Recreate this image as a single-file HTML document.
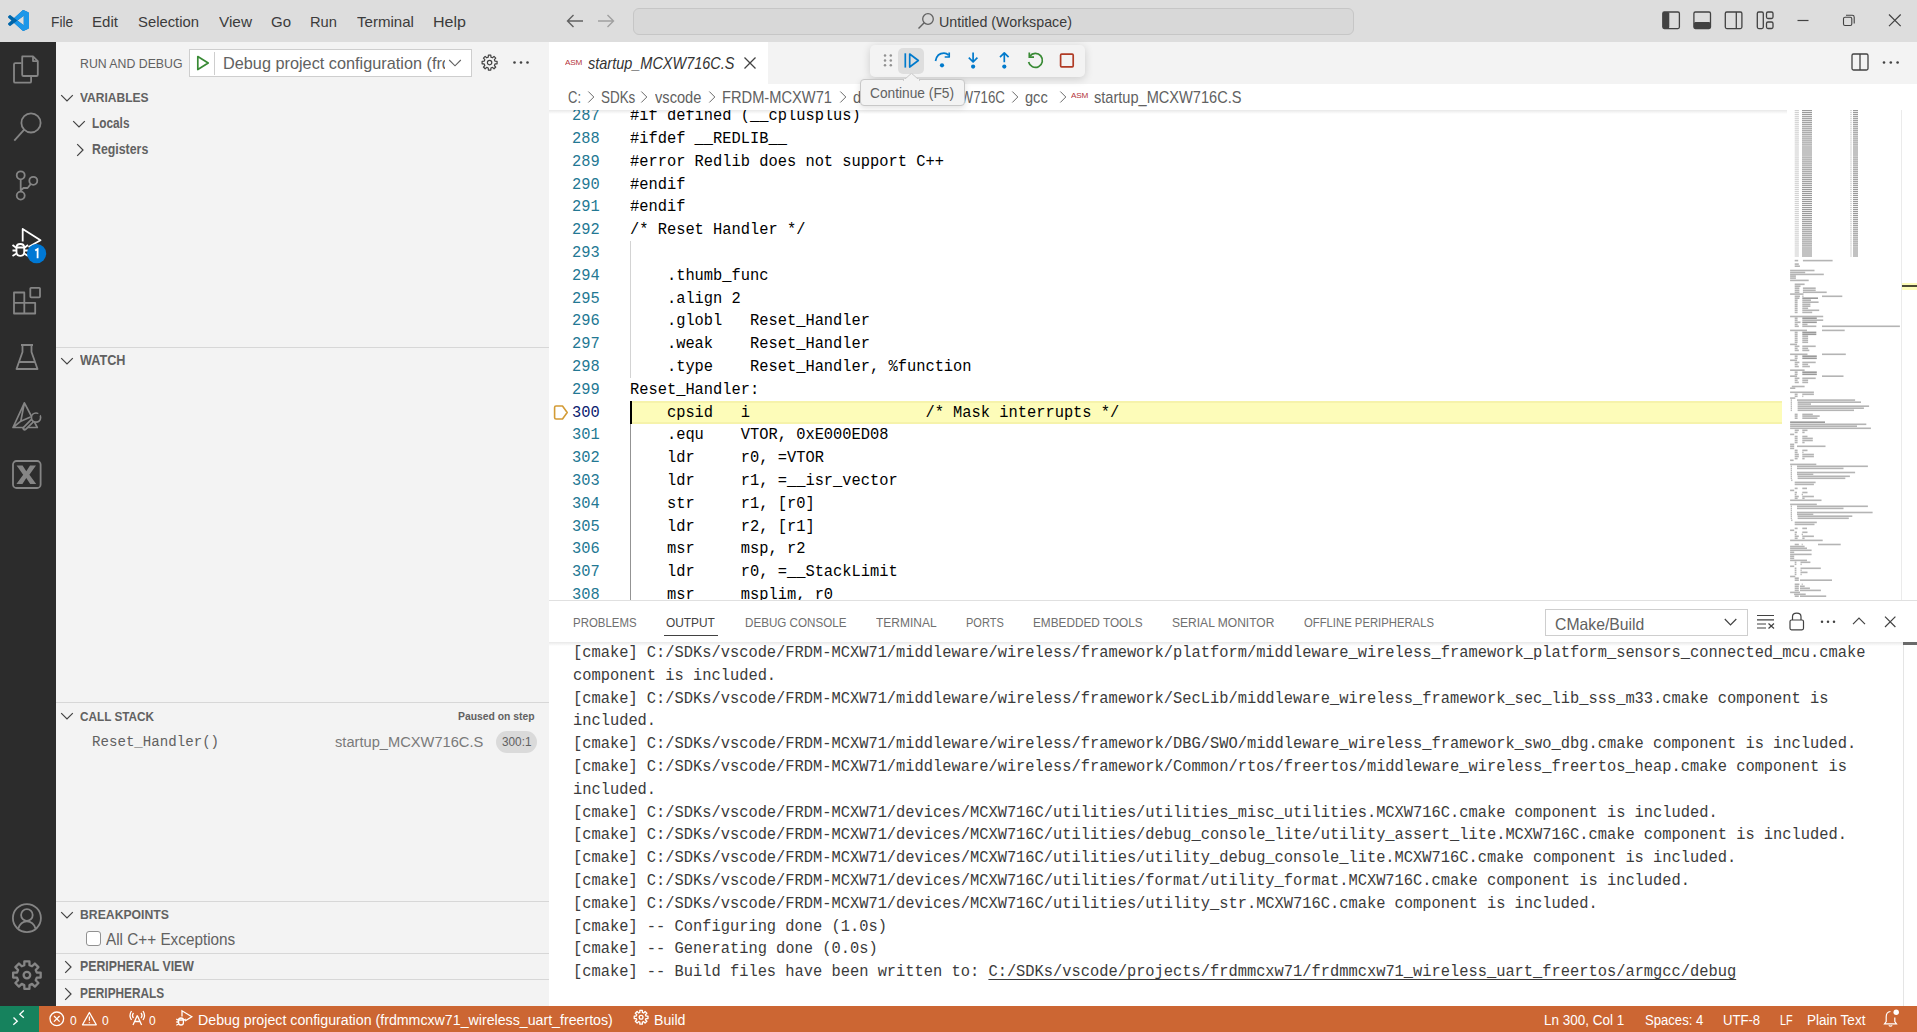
<!DOCTYPE html>
<html><head><meta charset="utf-8"><title>VS Code</title>
<style>
*{box-sizing:border-box;margin:0;padding:0}
html,body{width:1917px;height:1032px;overflow:hidden;background:#fff;position:relative}
.a{position:absolute}
.t{position:absolute;white-space:pre;line-height:1}
.code{position:absolute;white-space:pre;font-family:"Liberation Mono",monospace;font-size:16px;line-height:22.8px;height:22.8px;color:#000;transform:scaleX(0.96146);transform-origin:0 0;margin-top:0.6px}
</style></head><body>
<div class="a" style="left:0;top:0;width:1917px;height:42px;background:#dddddd"></div>
<svg class="a" style="left:8px;top:10px" width="21" height="21" viewBox="0 0 100 100"><path fill="#0065a9" d="M96.5 10.8L75.9 0.9C73.5-0.3 70.7 0.2 68.8 2.1L29.4 38.1 12.2 25.1C10.6 23.9 8.4 24 6.9 25.3L1.4 30.3C-0.4 32-0.4 34.8 1.4 36.5L16.3 50 1.4 63.5C-0.4 65.2-0.4 68 1.4 69.7L6.9 74.7C8.4 76 10.6 76.1 12.2 74.9L29.4 61.9 68.8 97.9C70.7 99.8 73.5 100.3 75.9 99.1L96.5 89.2C98.7 88.2 100 86 100 83.6V16.4C100 14 98.7 11.8 96.5 10.8ZM75 72.7L45.1 50 75 27.3V72.7Z"/><path fill="#1f9cf0" d="M96.5 10.8L75.9 0.9C73.5-0.3 70.7 0.2 68.8 2.1L29.4 38.1 45.1 50 75 27.3V72.7L45.1 50 29.4 61.9 68.8 97.9C70.7 99.8 73.5 100.3 75.9 99.1L96.5 89.2C98.7 88.2 100 86 100 83.6V16.4C100 14 98.7 11.8 96.5 10.8Z" opacity="0.9"/></svg>
<div class="t" style="left:50.60px;top:14.33px;font-size:15.55px;font-family:'Liberation Sans',sans-serif;font-weight:normal;font-style:normal;color:#3b3b3b;transform:scaleX(0.8826);transform-origin:0 0;">File</div>
<div class="t" style="left:92.00px;top:14.33px;font-size:15.55px;font-family:'Liberation Sans',sans-serif;font-weight:normal;font-style:normal;color:#3b3b3b;transform:scaleX(0.9691);transform-origin:0 0;">Edit</div>
<div class="t" style="left:138.00px;top:14.33px;font-size:15.55px;font-family:'Liberation Sans',sans-serif;font-weight:normal;font-style:normal;color:#3b3b3b;transform:scaleX(0.9532);transform-origin:0 0;">Selection</div>
<div class="t" style="left:219.00px;top:14.33px;font-size:15.55px;font-family:'Liberation Sans',sans-serif;font-weight:normal;font-style:normal;color:#3b3b3b;transform:scaleX(0.9869);transform-origin:0 0;">View</div>
<div class="t" style="left:271.00px;top:14.33px;font-size:15.55px;font-family:'Liberation Sans',sans-serif;font-weight:normal;font-style:normal;color:#3b3b3b;transform:scaleX(0.9633);transform-origin:0 0;">Go</div>
<div class="t" style="left:310.00px;top:14.33px;font-size:15.55px;font-family:'Liberation Sans',sans-serif;font-weight:normal;font-style:normal;color:#3b3b3b;transform:scaleX(0.9461);transform-origin:0 0;">Run</div>
<div class="t" style="left:357.00px;top:14.33px;font-size:15.55px;font-family:'Liberation Sans',sans-serif;font-weight:normal;font-style:normal;color:#3b3b3b;transform:scaleX(0.9696);transform-origin:0 0;">Terminal</div>
<div class="t" style="left:433.00px;top:14.33px;font-size:15.55px;font-family:'Liberation Sans',sans-serif;font-weight:normal;font-style:normal;color:#3b3b3b;transform:scaleX(1.0325);transform-origin:0 0;">Help</div>
<svg class="a" style="left:565px;top:12px" width="20" height="18" viewBox="0 0 20 18"><path d="M18 9H2.5M8.5 3L2.5 9l6 6" stroke="#616161" stroke-width="1.4" fill="none"/></svg>
<svg class="a" style="left:596px;top:12px" width="20" height="18" viewBox="0 0 20 18"><path d="M2 9h15.5M11.5 3l6 6-6 6" stroke="#a0a0a0" stroke-width="1.4" fill="none"/></svg>
<div class="a" style="left:633px;top:7.5px;width:721px;height:27px;border:1px solid #c6c6c6;border-radius:6px;background:#d8d8d8"></div>
<svg class="a" style="left:916px;top:11px" width="20" height="20" viewBox="0 0 20 20"><circle cx="12" cy="8" r="5.3" stroke="#616161" stroke-width="1.3" fill="none"/><path d="M8.2 11.8L2.5 17.5" stroke="#616161" stroke-width="1.4"/></svg>
<div class="t" style="left:939.00px;top:14.20px;font-size:15.12px;font-family:'Liberation Sans',sans-serif;font-weight:normal;font-style:normal;color:#3b3b3b;transform:scaleX(0.9440);transform-origin:0 0;">Untitled (Workspace)</div>
<svg class="a" style="left:1655px;top:5px" width="262" height="32" viewBox="1655 5 262 32">
<g fill="none" stroke="#424242" stroke-width="1.3">
<rect x="1662.8" y="12" width="16.6" height="16.6" rx="1.5"/>
<rect x="1693.9" y="12" width="16.6" height="16.6" rx="1.5"/>
<rect x="1725.3" y="12" width="16.6" height="16.6" rx="1.5"/>
<path d="M1736.3 12V28.6"/>
<rect x="1757.3" y="12" width="6" height="16.6" rx="1.5"/>
<rect x="1766.5" y="12" width="6.5" height="6.5" rx="1.5"/>
<rect x="1766.5" y="22" width="6.5" height="6.5" rx="1.5"/>
<path d="M1797.5 20.5H1808.5" stroke-width="1.2"/>
<rect x="1843.5" y="17.2" width="8.3" height="8.3" rx="1.5" stroke-width="1.1"/>
<path d="M1846 15.3H1852.3Q1854.2 15.3 1854.2 17.2V23.5" stroke-width="1.1"/>
<path d="M1889 14.5L1900.7 26.2M1900.7 14.5L1889 26.2" stroke-width="1.2"/>
</g>
<g fill="#424242">
<rect x="1662.8" y="12" width="6.5" height="16.6" rx="1.5"/>
<rect x="1693.9" y="22" width="16.6" height="6.6" rx="1.5"/>
</g>
</svg>
<div class="a" style="left:0;top:42px;width:56px;height:964px;background:#2c2c2c"></div>
<svg class="a" style="left:0;top:42px" width="56" height="964" viewBox="0 42 56 964">
<g fill="none" stroke="#858585" stroke-width="1.8" stroke-linejoin="round">
<path d="M21.5 63.2H15.3Q14 63.2 14 64.5V81.4Q14 82.7 15.3 82.7H29.8Q31.1 82.7 31.1 81.4V76.3"/>
<path d="M22.2 56.3H33L37.8 61.1V74.7Q37.8 76 36.5 76H23.5Q22.2 76 22.2 74.7V57.6Q22.2 56.3 23.5 56.3Z"/>
<path d="M33 56.3V61.1H37.8"/>
<circle cx="31" cy="122.9" r="9.6"/>
<path d="M24.2 129.7L14.3 140.6"/>
<circle cx="20.7" cy="175.3" r="4"/>
<circle cx="20.7" cy="195.6" r="4"/>
<circle cx="33.3" cy="180.8" r="4"/>
<path d="M20.7 179.3V191.6M30.8 184L27.6 188H23.5L20.7 190.5"/>
<path d="M14 292.5H24.3V313.5H14ZM14 302.8H35.2V313.5H24.3" />
<rect x="30.3" y="287.8" width="9.7" height="9.5" rx="0.8"/>
<path d="M21 345H33M22.5 345V352L16.5 369H37.5L31.5 352V345M19 362H35"/>
<path d="M24.4 402.8L13 427.5H37.3ZM24.4 402.8L20.8 421.2L13 427.5M20.8 421.2L30.5 417" stroke-width="1.7"/>
<path d="M24.6 428.4L32 421" stroke-width="4.6" stroke-linecap="round"/>
<path d="M24.6 428.4L32 421" stroke-width="1.2" stroke="#2c2c2c"/>
<circle cx="36" cy="417.6" r="4.6" stroke-width="1.7" fill="#2c2c2c"/>
<path d="M36.3 417.3L41 412.6" stroke-width="2.6" stroke="#2c2c2c"/>
<rect x="13" y="461" width="27.6" height="27" rx="3.5"/>
</g>
<path d="M16.6 465.4H22.6L26.3 471.3L30 465.4H36L29.4 474.7L36.2 484H30.2L26.3 478L22.4 484H16.4L23.2 474.7Z" fill="#858585"/>
<g fill="none" stroke="#858585" stroke-width="1.8" stroke-linejoin="round">
<circle cx="26.9" cy="918.1" r="14"/>
<circle cx="26.9" cy="915" r="5.8"/>
<path d="M18.3 928.5Q20.5 921.3 26.9 921.3Q33.3 921.3 35.5 928.5"/>
</g>
<g fill="none" stroke="#fff" stroke-width="1.8" stroke-linejoin="round">
<path d="M22.7 241.5V229L40.5 240.3L28.5 247" />
<path d="M16.5 247.5Q16.5 244 20.3 244Q24.2 244 24.2 247.5V252Q24.2 255.8 20.3 255.8Q16.5 255.8 16.5 252Z"/>
<path d="M12.5 245L16.5 248M12.5 250.5H16.5M12.5 256L16.5 253.5M28 245L24.2 248M28 250.5H24.2M28 256L24.2 253.5M16.5 247.5H24.2"/>
</g>
<circle cx="36.6" cy="253.6" r="9.6" fill="#0078d4"/>
<path d="M35.2 250.5L37.6 249V258.3" stroke="#fff" stroke-width="1.8" fill="none"/>
<path d="M36.76 972.49L40.67 972.58L40.67 977.62L36.76 977.71L35.72 980.22L38.42 983.06L34.86 986.62L32.02 983.92L29.51 984.96L29.42 988.87L24.38 988.87L24.29 984.96L21.78 983.92L18.94 986.62L15.38 983.06L18.08 980.22L17.04 977.71L13.13 977.62L13.13 972.58L17.04 972.49L18.08 969.98L15.38 967.14L18.94 963.58L21.78 966.28L24.29 965.24L24.38 961.33L29.42 961.33L29.51 965.24L32.02 966.28L34.86 963.58L38.42 967.14L35.72 969.98Z" fill="none" stroke="#858585" stroke-width="2.3" stroke-linejoin="round"/>
<circle cx="26.9" cy="975.1" r="3.3" fill="none" stroke="#858585" stroke-width="2.3"/>
</svg>
<div class="a" style="left:56px;top:42px;width:493px;height:964px;background:#f3f3f3"></div>
<div class="t" style="left:80.00px;top:57.22px;font-size:13.08px;font-family:'Liberation Sans',sans-serif;font-weight:normal;font-style:normal;color:#616161;transform:scaleX(0.9401);transform-origin:0 0;">RUN AND DEBUG</div>
<div class="a" style="left:189px;top:49.4px;width:283px;height:27.4px;background:#fff;border:1px solid #cecece"></div>
<svg class="a" style="left:195px;top:54px" width="16" height="18" viewBox="0 0 16 18"><path d="M2.8 2.5L13.2 9L2.8 15.5Z" fill="none" stroke="#388a34" stroke-width="1.7" stroke-linejoin="round"/></svg>
<div class="a" style="left:214px;top:51.5px;width:1px;height:23px;background:#cecece"></div>
<div class="a" style="left:222px;top:49px;width:223px;height:28px;overflow:hidden"><div class="t" style="left:0.90px;top:7.06px;font-size:15.99px;font-family:'Liberation Sans';color:#616161;transform:scaleX(1.0179);transform-origin:0 0">Debug project configuration (frdmmcxw71_wireless_uart_freertos)</div></div>
<svg class="a" style="left:447px;top:56px" width="16" height="14" viewBox="0 0 16 14"><path d="M2.2 4L8 9.8L13.8 4" fill="none" stroke="#616161" stroke-width="1.1"/></svg>
<svg class="a" style="left:480.30px;top:52.60px" width="19.20" height="19.20" viewBox="480.30 52.60 19.20 19.20"><path d="M495.34 60.87L497.40 60.98L497.40 63.42L495.34 63.53L494.69 65.11L496.07 66.64L494.34 68.37L492.81 66.99L491.23 67.64L491.12 69.70L488.68 69.70L488.57 67.64L486.99 66.99L485.46 68.37L483.73 66.64L485.11 65.11L484.46 63.53L482.40 63.42L482.40 60.98L484.46 60.87L485.11 59.29L483.73 57.76L485.46 56.03L486.99 57.41L488.57 56.76L488.68 54.70L491.12 54.70L491.23 56.76L492.81 57.41L494.34 56.03L496.07 57.76L494.69 59.29Z" fill="none" stroke="#424242" stroke-width="1.2" stroke-linejoin="round"/><circle cx="489.9" cy="62.2" r="2.2" fill="none" stroke="#424242" stroke-width="1.2"/></svg>
<svg class="a" style="left:512px;top:60px" width="18" height="5" viewBox="0 0 18 5"><g fill="#424242"><circle cx="2.5" cy="2.5" r="1.3"/><circle cx="9" cy="2.5" r="1.3"/><circle cx="15.5" cy="2.5" r="1.3"/></g></svg>
<svg class="a" style="left:60.4px;top:93.5px" width="14" height="9" viewBox="0 0 14 9"><path d="M1.2 1.2L7 7L12.8 1.2" fill="none" stroke="#424242" stroke-width="1.2"/></svg>
<div class="t" style="left:80.00px;top:90.83px;font-size:13.66px;font-family:'Liberation Sans',sans-serif;font-weight:bold;font-style:normal;color:#616161;transform:scaleX(0.8801);transform-origin:0 0;">VARIABLES</div>
<svg class="a" style="left:71.8px;top:119.7px" width="14" height="9" viewBox="0 0 14 9"><path d="M1.2 1.2L7 7L12.8 1.2" fill="none" stroke="#424242" stroke-width="1.2"/></svg>
<div class="t" style="left:92.30px;top:116.26px;font-size:14.10px;font-family:'Liberation Sans',sans-serif;font-weight:bold;font-style:normal;color:#616161;transform:scaleX(0.8391);transform-origin:0 0;">Locals</div>
<svg class="a" style="left:76px;top:143.3px" width="9" height="14" viewBox="0 0 9 14"><path d="M1.2 1.2L7 7L1.2 12.8" fill="none" stroke="#424242" stroke-width="1.2"/></svg>
<div class="t" style="left:92.30px;top:142.26px;font-size:14.10px;font-family:'Liberation Sans',sans-serif;font-weight:bold;font-style:normal;color:#616161;transform:scaleX(0.8757);transform-origin:0 0;">Registers</div>
<div class="a" style="left:56px;top:347px;width:493px;height:1px;background:#d7d7d7"></div>
<svg class="a" style="left:60.4px;top:356.8px" width="14" height="9" viewBox="0 0 14 9"><path d="M1.2 1.2L7 7L12.8 1.2" fill="none" stroke="#424242" stroke-width="1.2"/></svg>
<div class="t" style="left:80.00px;top:353.59px;font-size:13.95px;font-family:'Liberation Sans',sans-serif;font-weight:bold;font-style:normal;color:#616161;transform:scaleX(0.9083);transform-origin:0 0;">WATCH</div>
<div class="a" style="left:56px;top:702px;width:493px;height:1px;background:#d7d7d7"></div>
<svg class="a" style="left:60.4px;top:711.5px" width="14" height="9" viewBox="0 0 14 9"><path d="M1.2 1.2L7 7L12.8 1.2" fill="none" stroke="#424242" stroke-width="1.2"/></svg>
<div class="t" style="left:80.00px;top:709.63px;font-size:13.66px;font-family:'Liberation Sans',sans-serif;font-weight:bold;font-style:normal;color:#616161;transform:scaleX(0.8604);transform-origin:0 0;">CALL STACK</div>
<div class="t" style="left:458.00px;top:710.35px;font-size:11.63px;font-family:'Liberation Sans',sans-serif;font-weight:bold;font-style:normal;color:#616161;transform:scaleX(0.8903);transform-origin:0 0;">Paused on step</div>
<div class="t" style="left:92.30px;top:734.67px;font-size:15.17px;font-family:'Liberation Mono',monospace;font-weight:normal;font-style:normal;color:#616161;transform:scaleX(0.9314);transform-origin:0 0;">Reset_Handler()</div>
<div class="t" style="left:334.60px;top:735.04px;font-size:14.24px;font-family:'Liberation Sans',sans-serif;font-weight:normal;font-style:normal;color:#7a7a7a;transform:scaleX(1.0300);transform-origin:0 0;">startup_MCXW716C.S</div>
<div class="a" style="left:496px;top:731.3px;width:41px;height:21.5px;border-radius:11px;background:#dadada"></div>
<div class="t" style="left:501.50px;top:735.92px;font-size:12.50px;font-family:'Liberation Sans',sans-serif;font-weight:normal;font-style:normal;color:#616161;transform:scaleX(0.9421);transform-origin:0 0;">300:1</div>
<div class="a" style="left:56px;top:900.5px;width:493px;height:1px;background:#d7d7d7"></div>
<svg class="a" style="left:60.4px;top:910.5px" width="14" height="9" viewBox="0 0 14 9"><path d="M1.2 1.2L7 7L12.8 1.2" fill="none" stroke="#424242" stroke-width="1.2"/></svg>
<div class="t" style="left:80.00px;top:907.75px;font-size:13.52px;font-family:'Liberation Sans',sans-serif;font-weight:bold;font-style:normal;color:#616161;transform:scaleX(0.9044);transform-origin:0 0;">BREAKPOINTS</div>
<div class="a" style="left:86.3px;top:931px;width:15.2px;height:15.3px;border:1px solid #919191;border-radius:3px;background:#fff"></div>
<div class="t" style="left:106.00px;top:931.86px;font-size:15.99px;font-family:'Liberation Sans',sans-serif;font-weight:normal;font-style:normal;color:#616161;transform:scaleX(0.9571);transform-origin:0 0;">All C++ Exceptions</div>
<div class="a" style="left:56px;top:953px;width:493px;height:1px;background:#d7d7d7"></div>
<svg class="a" style="left:64px;top:960px" width="9" height="14" viewBox="0 0 9 14"><path d="M1.2 1.2L7 7L1.2 12.8" fill="none" stroke="#424242" stroke-width="1.2"/></svg>
<div class="t" style="left:80.00px;top:959.61px;font-size:13.81px;font-family:'Liberation Sans',sans-serif;font-weight:bold;font-style:normal;color:#616161;transform:scaleX(0.8916);transform-origin:0 0;">PERIPHERAL VIEW</div>
<div class="a" style="left:56px;top:979.3px;width:493px;height:1px;background:#d7d7d7"></div>
<svg class="a" style="left:64px;top:986.5px" width="9" height="14" viewBox="0 0 9 14"><path d="M1.2 1.2L7 7L1.2 12.8" fill="none" stroke="#424242" stroke-width="1.2"/></svg>
<div class="t" style="left:80.00px;top:986.51px;font-size:13.81px;font-family:'Liberation Sans',sans-serif;font-weight:bold;font-style:normal;color:#616161;transform:scaleX(0.8581);transform-origin:0 0;">PERIPHERALS</div>
<div class="a" style="left:549px;top:42px;width:1368px;height:42px;background:#f3f3f3"></div>
<div class="a" style="left:549px;top:42px;width:219px;height:42px;background:#fff"></div>
<div class="t" style="left:565px;top:58.5px;font-size:8.20px;font-family:'Liberation Sans';color:#b4353a;letter-spacing:-0.2px;transform:scaleY(0.95)">ASM</div>
<div class="t" style="left:587.50px;top:56.46px;font-size:15.99px;font-family:'Liberation Sans',sans-serif;font-weight:normal;font-style:italic;color:#333333;transform:scaleX(0.9059);transform-origin:0 0;">startup_MCXW716C.S</div>
<svg class="a" style="left:742px;top:55px" width="16" height="16" viewBox="0 0 16 16"><path d="M2.5 2.5L13.5 13.5M13.5 2.5L2.5 13.5" stroke="#424242" stroke-width="1.3"/></svg>
<svg class="a" style="left:1850px;top:52px" width="20" height="20" viewBox="0 0 20 20"><g fill="none" stroke="#424242" stroke-width="1.3"><rect x="2" y="2" width="16" height="16" rx="1.5"/><path d="M10 2V18"/></g></svg>
<svg class="a" style="left:1881px;top:60px" width="20" height="5" viewBox="0 0 20 5"><g fill="#424242"><circle cx="3" cy="2.5" r="1.3"/><circle cx="9.8" cy="2.5" r="1.3"/><circle cx="16.6" cy="2.5" r="1.3"/></g></svg>
<div class="a" style="left:549px;top:84px;width:1368px;height:26.4px;background:#fff"></div>
<div class="t" style="left:568.40px;top:90.11px;font-size:15.70px;font-family:'Liberation Sans',sans-serif;font-weight:normal;font-style:normal;color:#616161;transform:scaleX(0.8281);transform-origin:0 0;">C:</div>
<svg class="a" style="left:586.7px;top:90px" width="9" height="14" viewBox="0 0 9 14"><path d="M1.3 1.5L6.8 7L1.3 12.5" fill="none" stroke="#6a6a6a" stroke-width="1.0"/></svg>
<div class="t" style="left:600.50px;top:90.11px;font-size:15.70px;font-family:'Liberation Sans',sans-serif;font-weight:normal;font-style:normal;color:#616161;transform:scaleX(0.8552);transform-origin:0 0;">SDKs</div>
<svg class="a" style="left:640.0px;top:90px" width="9" height="14" viewBox="0 0 9 14"><path d="M1.3 1.5L6.8 7L1.3 12.5" fill="none" stroke="#6a6a6a" stroke-width="1.0"/></svg>
<div class="t" style="left:655.00px;top:90.11px;font-size:15.70px;font-family:'Liberation Sans',sans-serif;font-weight:normal;font-style:normal;color:#616161;transform:scaleX(0.9324);transform-origin:0 0;">vscode</div>
<svg class="a" style="left:707.5px;top:90px" width="9" height="14" viewBox="0 0 9 14"><path d="M1.3 1.5L6.8 7L1.3 12.5" fill="none" stroke="#6a6a6a" stroke-width="1.0"/></svg>
<div class="t" style="left:722.30px;top:90.11px;font-size:15.70px;font-family:'Liberation Sans',sans-serif;font-weight:normal;font-style:normal;color:#616161;transform:scaleX(0.9352);transform-origin:0 0;">FRDM-MCXW71</div>
<svg class="a" style="left:838.6px;top:90px" width="9" height="14" viewBox="0 0 9 14"><path d="M1.3 1.5L6.8 7L1.3 12.5" fill="none" stroke="#6a6a6a" stroke-width="1.0"/></svg>
<div class="t" style="left:853.30px;top:90.11px;font-size:15.70px;font-family:'Liberation Sans',sans-serif;font-weight:normal;font-style:normal;color:#616161;transform:scaleX(0.9396);transform-origin:0 0;">devices</div>
<div class="t" style="left:931.00px;top:90.11px;font-size:15.70px;font-family:'Liberation Sans',sans-serif;font-weight:normal;font-style:normal;color:#616161;transform:scaleX(0.8486);transform-origin:0 0;">MCXW716C</div>
<svg class="a" style="left:1011.4px;top:90px" width="9" height="14" viewBox="0 0 9 14"><path d="M1.3 1.5L6.8 7L1.3 12.5" fill="none" stroke="#6a6a6a" stroke-width="1.0"/></svg>
<div class="t" style="left:1025.00px;top:90.11px;font-size:15.70px;font-family:'Liberation Sans',sans-serif;font-weight:normal;font-style:normal;color:#616161;transform:scaleX(0.9300);transform-origin:0 0;">gcc</div>
<svg class="a" style="left:1058.5px;top:90px" width="9" height="14" viewBox="0 0 9 14"><path d="M1.3 1.5L6.8 7L1.3 12.5" fill="none" stroke="#6a6a6a" stroke-width="1.0"/></svg>
<div class="t" style="left:1071px;top:91.5px;font-size:8.20px;font-family:'Liberation Sans';color:#b4353a;letter-spacing:-0.2px;transform:scaleY(0.95)">ASM</div>
<div class="t" style="left:1094.00px;top:90.11px;font-size:15.70px;font-family:'Liberation Sans',sans-serif;font-weight:normal;font-style:normal;color:#616161;transform:scaleX(0.9296);transform-origin:0 0;">startup_MCXW716C.S</div>
<div class="a" style="left:549px;top:110.4px;width:1368px;height:489.6px;overflow:hidden">
<div class="a" style="left:81px;top:290.60px;width:1152px;height:22.8px;background:#fdfcb9;border-top:2px solid #f6f3ab;border-bottom:2px solid #f6f3ab"></div>
<div class="a" style="left:81px;top:290.60px;width:2px;height:23px;background:#000"></div>
<div class="a" style="left:81.4px;top:131.00px;width:1px;height:136.80px;background:#d3d3d3"></div>
<div class="a" style="left:81.4px;top:313.60px;width:1px;height:205.20px;background:#939393"></div>
<div class="code" style="left:23.31px;top:-5.80px;color:#237893">287</div>
<div class="code" style="left:81px;top:-5.80px">#if defined (__cplusplus)</div>
<div class="code" style="left:23.31px;top:17.00px;color:#237893">288</div>
<div class="code" style="left:81px;top:17.00px">#ifdef __REDLIB__</div>
<div class="code" style="left:23.31px;top:39.80px;color:#237893">289</div>
<div class="code" style="left:81px;top:39.80px">#error Redlib does not support C++</div>
<div class="code" style="left:23.31px;top:62.60px;color:#237893">290</div>
<div class="code" style="left:81px;top:62.60px">#endif</div>
<div class="code" style="left:23.31px;top:85.40px;color:#237893">291</div>
<div class="code" style="left:81px;top:85.40px">#endif</div>
<div class="code" style="left:23.31px;top:108.20px;color:#237893">292</div>
<div class="code" style="left:81px;top:108.20px">/* Reset Handler */</div>
<div class="code" style="left:23.31px;top:131.00px;color:#237893">293</div>
<div class="code" style="left:23.31px;top:153.80px;color:#237893">294</div>
<div class="code" style="left:81px;top:153.80px">    .thumb_func</div>
<div class="code" style="left:23.31px;top:176.60px;color:#237893">295</div>
<div class="code" style="left:81px;top:176.60px">    .align 2</div>
<div class="code" style="left:23.31px;top:199.40px;color:#237893">296</div>
<div class="code" style="left:81px;top:199.40px">    .globl   Reset_Handler</div>
<div class="code" style="left:23.31px;top:222.20px;color:#237893">297</div>
<div class="code" style="left:81px;top:222.20px">    .weak    Reset_Handler</div>
<div class="code" style="left:23.31px;top:245.00px;color:#237893">298</div>
<div class="code" style="left:81px;top:245.00px">    .type    Reset_Handler, %function</div>
<div class="code" style="left:23.31px;top:267.80px;color:#237893">299</div>
<div class="code" style="left:81px;top:267.80px">Reset_Handler:</div>
<div class="code" style="left:23.31px;top:290.60px;color:#0b216f">300</div>
<div class="code" style="left:81px;top:290.60px">    cpsid   i                   /* Mask interrupts */</div>
<div class="code" style="left:23.31px;top:313.40px;color:#237893">301</div>
<div class="code" style="left:81px;top:313.40px">    .equ    VTOR, 0xE000ED08</div>
<div class="code" style="left:23.31px;top:336.20px;color:#237893">302</div>
<div class="code" style="left:81px;top:336.20px">    ldr     r0, =VTOR</div>
<div class="code" style="left:23.31px;top:359.00px;color:#237893">303</div>
<div class="code" style="left:81px;top:359.00px">    ldr     r1, =__isr_vector</div>
<div class="code" style="left:23.31px;top:381.80px;color:#237893">304</div>
<div class="code" style="left:81px;top:381.80px">    str     r1, [r0]</div>
<div class="code" style="left:23.31px;top:404.60px;color:#237893">305</div>
<div class="code" style="left:81px;top:404.60px">    ldr     r2, [r1]</div>
<div class="code" style="left:23.31px;top:427.40px;color:#237893">306</div>
<div class="code" style="left:81px;top:427.40px">    msr     msp, r2</div>
<div class="code" style="left:23.31px;top:450.20px;color:#237893">307</div>
<div class="code" style="left:81px;top:450.20px">    ldr     r0, =__StackLimit</div>
<div class="code" style="left:23.31px;top:473.00px;color:#237893">308</div>
<div class="code" style="left:81px;top:473.00px">    msr     msplim, r0</div>
</div>
<svg class="a" style="left:552px;top:403px" width="18" height="19" viewBox="0 0 18 19"><path d="M4 3H10.5L15.2 9.5L10.5 16H4Q2.6 16 2.6 14.6V4.4Q2.6 3 4 3Z" fill="#fff" stroke="#d39b35" stroke-width="1.6" stroke-linejoin="round"/></svg>
<div class="a" style="left:549px;top:110.4px;width:1238px;height:4px;background:linear-gradient(rgba(0,0,0,0.09),rgba(0,0,0,0))"></div>
<div class="a" style="left:1901px;top:110.4px;width:1px;height:489.6px;background:#ebebeb"></div>
<div class="a" style="left:1902px;top:283px;width:15px;height:6.5px;background:#fdfcb9"></div>
<div class="a" style="left:1902px;top:285.3px;width:15px;height:2px;background:#4b4934"></div>
<svg class="a" style="left:1786px;top:110.4px" width="115" height="489.6" viewBox="1786 110.4 115 489.6"><rect x="1794.7" y="110.4" width="4.2" height="1.2" fill="#d2d2d2"/><rect x="1802.0" y="110.4" width="10.0" height="1.2" fill="#9a9a9a"/><rect x="1850.2" y="110.4" width="1.6" height="1.2" fill="#d2d2d2"/><rect x="1853.0" y="110.4" width="5.0" height="1.2" fill="#9a9a9a"/><rect x="1794.7" y="112.4" width="4.2" height="1.2" fill="#d2d2d2"/><rect x="1802.0" y="112.4" width="10.0" height="1.2" fill="#9a9a9a"/><rect x="1850.2" y="112.4" width="1.6" height="1.2" fill="#d2d2d2"/><rect x="1853.0" y="112.4" width="5.0" height="1.2" fill="#9a9a9a"/><rect x="1794.7" y="114.4" width="4.2" height="1.2" fill="#d2d2d2"/><rect x="1802.0" y="114.4" width="10.0" height="1.2" fill="#9a9a9a"/><rect x="1850.2" y="114.4" width="1.6" height="1.2" fill="#d2d2d2"/><rect x="1853.0" y="114.4" width="5.0" height="1.2" fill="#9a9a9a"/><rect x="1794.7" y="116.5" width="4.2" height="1.2" fill="#d2d2d2"/><rect x="1802.0" y="116.5" width="10.0" height="1.2" fill="#9a9a9a"/><rect x="1850.2" y="116.5" width="1.6" height="1.2" fill="#d2d2d2"/><rect x="1853.0" y="116.5" width="5.0" height="1.2" fill="#9a9a9a"/><rect x="1794.7" y="118.5" width="4.2" height="1.2" fill="#d2d2d2"/><rect x="1802.0" y="118.5" width="10.0" height="1.2" fill="#9a9a9a"/><rect x="1850.2" y="118.5" width="1.6" height="1.2" fill="#d2d2d2"/><rect x="1853.0" y="118.5" width="5.0" height="1.2" fill="#9a9a9a"/><rect x="1794.7" y="120.5" width="4.2" height="1.2" fill="#d2d2d2"/><rect x="1802.0" y="120.5" width="10.0" height="1.2" fill="#9a9a9a"/><rect x="1850.2" y="120.5" width="1.6" height="1.2" fill="#d2d2d2"/><rect x="1853.0" y="120.5" width="5.0" height="1.2" fill="#9a9a9a"/><rect x="1794.7" y="122.5" width="4.2" height="1.2" fill="#d2d2d2"/><rect x="1802.0" y="122.5" width="10.0" height="1.2" fill="#9a9a9a"/><rect x="1850.2" y="122.5" width="1.6" height="1.2" fill="#d2d2d2"/><rect x="1853.0" y="122.5" width="5.0" height="1.2" fill="#9a9a9a"/><rect x="1794.7" y="124.5" width="4.2" height="1.2" fill="#d2d2d2"/><rect x="1802.0" y="124.5" width="10.0" height="1.2" fill="#9a9a9a"/><rect x="1850.2" y="124.5" width="1.6" height="1.2" fill="#d2d2d2"/><rect x="1853.0" y="124.5" width="5.0" height="1.2" fill="#9a9a9a"/><rect x="1794.7" y="126.6" width="4.2" height="1.2" fill="#d2d2d2"/><rect x="1802.0" y="126.6" width="10.0" height="1.2" fill="#9a9a9a"/><rect x="1850.2" y="126.6" width="1.6" height="1.2" fill="#d2d2d2"/><rect x="1853.0" y="126.6" width="5.0" height="1.2" fill="#9a9a9a"/><rect x="1794.7" y="128.6" width="4.2" height="1.2" fill="#d2d2d2"/><rect x="1802.0" y="128.6" width="10.0" height="1.2" fill="#9a9a9a"/><rect x="1850.2" y="128.6" width="1.6" height="1.2" fill="#d2d2d2"/><rect x="1853.0" y="128.6" width="5.0" height="1.2" fill="#9a9a9a"/><rect x="1794.7" y="130.6" width="4.2" height="1.2" fill="#d2d2d2"/><rect x="1802.0" y="130.6" width="10.0" height="1.2" fill="#9a9a9a"/><rect x="1850.2" y="130.6" width="1.6" height="1.2" fill="#d2d2d2"/><rect x="1853.0" y="130.6" width="5.0" height="1.2" fill="#9a9a9a"/><rect x="1794.7" y="132.6" width="4.2" height="1.2" fill="#d2d2d2"/><rect x="1802.0" y="132.6" width="10.0" height="1.2" fill="#9a9a9a"/><rect x="1850.2" y="132.6" width="1.6" height="1.2" fill="#d2d2d2"/><rect x="1853.0" y="132.6" width="5.0" height="1.2" fill="#9a9a9a"/><rect x="1794.7" y="134.6" width="4.2" height="1.2" fill="#d2d2d2"/><rect x="1802.0" y="134.6" width="10.0" height="1.2" fill="#9a9a9a"/><rect x="1850.2" y="134.6" width="1.6" height="1.2" fill="#d2d2d2"/><rect x="1853.0" y="134.6" width="5.0" height="1.2" fill="#9a9a9a"/><rect x="1794.7" y="136.7" width="4.2" height="1.2" fill="#d2d2d2"/><rect x="1802.0" y="136.7" width="10.0" height="1.2" fill="#9a9a9a"/><rect x="1850.2" y="136.7" width="1.6" height="1.2" fill="#d2d2d2"/><rect x="1853.0" y="136.7" width="5.0" height="1.2" fill="#9a9a9a"/><rect x="1794.7" y="138.7" width="4.2" height="1.2" fill="#d2d2d2"/><rect x="1802.0" y="138.7" width="10.0" height="1.2" fill="#9a9a9a"/><rect x="1850.2" y="138.7" width="1.6" height="1.2" fill="#d2d2d2"/><rect x="1853.0" y="138.7" width="5.0" height="1.2" fill="#9a9a9a"/><rect x="1794.7" y="140.7" width="4.2" height="1.2" fill="#d2d2d2"/><rect x="1802.0" y="140.7" width="10.0" height="1.2" fill="#9a9a9a"/><rect x="1850.2" y="140.7" width="1.6" height="1.2" fill="#d2d2d2"/><rect x="1853.0" y="140.7" width="5.0" height="1.2" fill="#9a9a9a"/><rect x="1794.7" y="142.7" width="4.2" height="1.2" fill="#d2d2d2"/><rect x="1802.0" y="142.7" width="10.0" height="1.2" fill="#9a9a9a"/><rect x="1850.2" y="142.7" width="1.6" height="1.2" fill="#d2d2d2"/><rect x="1853.0" y="142.7" width="5.0" height="1.2" fill="#9a9a9a"/><rect x="1794.7" y="144.7" width="4.2" height="1.2" fill="#d2d2d2"/><rect x="1802.0" y="144.7" width="10.0" height="1.2" fill="#9a9a9a"/><rect x="1850.2" y="144.7" width="1.6" height="1.2" fill="#d2d2d2"/><rect x="1853.0" y="144.7" width="5.0" height="1.2" fill="#9a9a9a"/><rect x="1794.7" y="146.8" width="4.2" height="1.2" fill="#d2d2d2"/><rect x="1802.0" y="146.8" width="10.0" height="1.2" fill="#9a9a9a"/><rect x="1850.2" y="146.8" width="1.6" height="1.2" fill="#d2d2d2"/><rect x="1853.0" y="146.8" width="5.0" height="1.2" fill="#9a9a9a"/><rect x="1794.7" y="148.8" width="4.2" height="1.2" fill="#d2d2d2"/><rect x="1802.0" y="148.8" width="10.0" height="1.2" fill="#9a9a9a"/><rect x="1850.2" y="148.8" width="1.6" height="1.2" fill="#d2d2d2"/><rect x="1853.0" y="148.8" width="5.0" height="1.2" fill="#9a9a9a"/><rect x="1794.7" y="150.8" width="4.2" height="1.2" fill="#d2d2d2"/><rect x="1802.0" y="150.8" width="10.0" height="1.2" fill="#9a9a9a"/><rect x="1850.2" y="150.8" width="1.6" height="1.2" fill="#d2d2d2"/><rect x="1853.0" y="150.8" width="5.0" height="1.2" fill="#9a9a9a"/><rect x="1794.7" y="152.8" width="4.2" height="1.2" fill="#d2d2d2"/><rect x="1802.0" y="152.8" width="10.0" height="1.2" fill="#9a9a9a"/><rect x="1850.2" y="152.8" width="1.6" height="1.2" fill="#d2d2d2"/><rect x="1853.0" y="152.8" width="5.0" height="1.2" fill="#9a9a9a"/><rect x="1794.7" y="154.8" width="4.2" height="1.2" fill="#d2d2d2"/><rect x="1802.0" y="154.8" width="10.0" height="1.2" fill="#9a9a9a"/><rect x="1850.2" y="154.8" width="1.6" height="1.2" fill="#d2d2d2"/><rect x="1853.0" y="154.8" width="5.0" height="1.2" fill="#9a9a9a"/><rect x="1794.7" y="156.9" width="4.2" height="1.2" fill="#d2d2d2"/><rect x="1802.0" y="156.9" width="10.0" height="1.2" fill="#9a9a9a"/><rect x="1850.2" y="156.9" width="1.6" height="1.2" fill="#d2d2d2"/><rect x="1853.0" y="156.9" width="5.0" height="1.2" fill="#9a9a9a"/><rect x="1794.7" y="158.9" width="4.2" height="1.2" fill="#d2d2d2"/><rect x="1802.0" y="158.9" width="10.0" height="1.2" fill="#9a9a9a"/><rect x="1850.2" y="158.9" width="1.6" height="1.2" fill="#d2d2d2"/><rect x="1853.0" y="158.9" width="5.0" height="1.2" fill="#9a9a9a"/><rect x="1794.7" y="160.9" width="4.2" height="1.2" fill="#d2d2d2"/><rect x="1802.0" y="160.9" width="10.0" height="1.2" fill="#9a9a9a"/><rect x="1850.2" y="160.9" width="1.6" height="1.2" fill="#d2d2d2"/><rect x="1853.0" y="160.9" width="5.0" height="1.2" fill="#9a9a9a"/><rect x="1794.7" y="162.9" width="4.2" height="1.2" fill="#d2d2d2"/><rect x="1802.0" y="162.9" width="10.0" height="1.2" fill="#9a9a9a"/><rect x="1850.2" y="162.9" width="1.6" height="1.2" fill="#d2d2d2"/><rect x="1853.0" y="162.9" width="5.0" height="1.2" fill="#9a9a9a"/><rect x="1794.7" y="164.9" width="4.2" height="1.2" fill="#d2d2d2"/><rect x="1802.0" y="164.9" width="10.0" height="1.2" fill="#9a9a9a"/><rect x="1850.2" y="164.9" width="1.6" height="1.2" fill="#d2d2d2"/><rect x="1853.0" y="164.9" width="5.0" height="1.2" fill="#9a9a9a"/><rect x="1794.7" y="167.0" width="4.2" height="1.2" fill="#d2d2d2"/><rect x="1802.0" y="167.0" width="10.0" height="1.2" fill="#9a9a9a"/><rect x="1850.2" y="167.0" width="1.6" height="1.2" fill="#d2d2d2"/><rect x="1853.0" y="167.0" width="5.0" height="1.2" fill="#9a9a9a"/><rect x="1794.7" y="169.0" width="4.2" height="1.2" fill="#d2d2d2"/><rect x="1802.0" y="169.0" width="10.0" height="1.2" fill="#9a9a9a"/><rect x="1850.2" y="169.0" width="1.6" height="1.2" fill="#d2d2d2"/><rect x="1853.0" y="169.0" width="5.0" height="1.2" fill="#9a9a9a"/><rect x="1794.7" y="171.0" width="4.2" height="1.2" fill="#d2d2d2"/><rect x="1802.0" y="171.0" width="10.0" height="1.2" fill="#9a9a9a"/><rect x="1850.2" y="171.0" width="1.6" height="1.2" fill="#d2d2d2"/><rect x="1853.0" y="171.0" width="5.0" height="1.2" fill="#9a9a9a"/><rect x="1794.7" y="173.0" width="4.2" height="1.2" fill="#d2d2d2"/><rect x="1802.0" y="173.0" width="10.0" height="1.2" fill="#9a9a9a"/><rect x="1850.2" y="173.0" width="1.6" height="1.2" fill="#d2d2d2"/><rect x="1853.0" y="173.0" width="5.0" height="1.2" fill="#9a9a9a"/><rect x="1794.7" y="175.0" width="4.2" height="1.2" fill="#d2d2d2"/><rect x="1802.0" y="175.0" width="10.0" height="1.2" fill="#9a9a9a"/><rect x="1850.2" y="175.0" width="1.6" height="1.2" fill="#d2d2d2"/><rect x="1853.0" y="175.0" width="5.0" height="1.2" fill="#9a9a9a"/><rect x="1794.7" y="177.1" width="4.2" height="1.2" fill="#d2d2d2"/><rect x="1802.0" y="177.1" width="10.0" height="1.2" fill="#9a9a9a"/><rect x="1850.2" y="177.1" width="1.6" height="1.2" fill="#d2d2d2"/><rect x="1853.0" y="177.1" width="5.0" height="1.2" fill="#9a9a9a"/><rect x="1794.7" y="179.1" width="4.2" height="1.2" fill="#d2d2d2"/><rect x="1802.0" y="179.1" width="10.0" height="1.2" fill="#9a9a9a"/><rect x="1850.2" y="179.1" width="1.6" height="1.2" fill="#d2d2d2"/><rect x="1853.0" y="179.1" width="5.0" height="1.2" fill="#9a9a9a"/><rect x="1794.7" y="181.1" width="4.2" height="1.2" fill="#d2d2d2"/><rect x="1802.0" y="181.1" width="10.0" height="1.2" fill="#9a9a9a"/><rect x="1850.2" y="181.1" width="1.6" height="1.2" fill="#d2d2d2"/><rect x="1853.0" y="181.1" width="5.0" height="1.2" fill="#9a9a9a"/><rect x="1794.7" y="183.1" width="4.2" height="1.2" fill="#d2d2d2"/><rect x="1802.0" y="183.1" width="10.0" height="1.2" fill="#9a9a9a"/><rect x="1850.2" y="183.1" width="1.6" height="1.2" fill="#d2d2d2"/><rect x="1853.0" y="183.1" width="5.0" height="1.2" fill="#9a9a9a"/><rect x="1794.7" y="185.1" width="4.2" height="1.2" fill="#d2d2d2"/><rect x="1802.0" y="185.1" width="10.0" height="1.2" fill="#9a9a9a"/><rect x="1850.2" y="185.1" width="1.6" height="1.2" fill="#d2d2d2"/><rect x="1853.0" y="185.1" width="5.0" height="1.2" fill="#9a9a9a"/><rect x="1794.7" y="187.2" width="4.2" height="1.2" fill="#d2d2d2"/><rect x="1802.0" y="187.2" width="10.0" height="1.2" fill="#9a9a9a"/><rect x="1850.2" y="187.2" width="1.6" height="1.2" fill="#d2d2d2"/><rect x="1853.0" y="187.2" width="5.0" height="1.2" fill="#9a9a9a"/><rect x="1794.7" y="189.2" width="4.2" height="1.2" fill="#d2d2d2"/><rect x="1802.0" y="189.2" width="10.0" height="1.2" fill="#9a9a9a"/><rect x="1850.2" y="189.2" width="1.6" height="1.2" fill="#d2d2d2"/><rect x="1853.0" y="189.2" width="5.0" height="1.2" fill="#9a9a9a"/><rect x="1794.7" y="191.2" width="4.2" height="1.2" fill="#d2d2d2"/><rect x="1802.0" y="191.2" width="10.0" height="1.2" fill="#9a9a9a"/><rect x="1850.2" y="191.2" width="1.6" height="1.2" fill="#d2d2d2"/><rect x="1853.0" y="191.2" width="5.0" height="1.2" fill="#9a9a9a"/><rect x="1794.7" y="193.2" width="4.2" height="1.2" fill="#d2d2d2"/><rect x="1802.0" y="193.2" width="10.0" height="1.2" fill="#9a9a9a"/><rect x="1850.2" y="193.2" width="1.6" height="1.2" fill="#d2d2d2"/><rect x="1853.0" y="193.2" width="5.0" height="1.2" fill="#9a9a9a"/><rect x="1794.7" y="195.2" width="4.2" height="1.2" fill="#d2d2d2"/><rect x="1802.0" y="195.2" width="10.0" height="1.2" fill="#9a9a9a"/><rect x="1850.2" y="195.2" width="1.6" height="1.2" fill="#d2d2d2"/><rect x="1853.0" y="195.2" width="5.0" height="1.2" fill="#9a9a9a"/><rect x="1794.7" y="197.3" width="4.2" height="1.2" fill="#d2d2d2"/><rect x="1802.0" y="197.3" width="10.0" height="1.2" fill="#9a9a9a"/><rect x="1850.2" y="197.3" width="1.6" height="1.2" fill="#d2d2d2"/><rect x="1853.0" y="197.3" width="5.0" height="1.2" fill="#9a9a9a"/><rect x="1794.7" y="199.3" width="4.2" height="1.2" fill="#d2d2d2"/><rect x="1802.0" y="199.3" width="10.0" height="1.2" fill="#9a9a9a"/><rect x="1850.2" y="199.3" width="1.6" height="1.2" fill="#d2d2d2"/><rect x="1853.0" y="199.3" width="5.0" height="1.2" fill="#9a9a9a"/><rect x="1794.7" y="201.3" width="4.2" height="1.2" fill="#d2d2d2"/><rect x="1802.0" y="201.3" width="10.0" height="1.2" fill="#9a9a9a"/><rect x="1850.2" y="201.3" width="1.6" height="1.2" fill="#d2d2d2"/><rect x="1853.0" y="201.3" width="5.0" height="1.2" fill="#9a9a9a"/><rect x="1794.7" y="203.3" width="4.2" height="1.2" fill="#d2d2d2"/><rect x="1802.0" y="203.3" width="10.0" height="1.2" fill="#9a9a9a"/><rect x="1850.2" y="203.3" width="1.6" height="1.2" fill="#d2d2d2"/><rect x="1853.0" y="203.3" width="5.0" height="1.2" fill="#9a9a9a"/><rect x="1794.7" y="205.3" width="4.2" height="1.2" fill="#d2d2d2"/><rect x="1802.0" y="205.3" width="10.0" height="1.2" fill="#9a9a9a"/><rect x="1850.2" y="205.3" width="1.6" height="1.2" fill="#d2d2d2"/><rect x="1853.0" y="205.3" width="5.0" height="1.2" fill="#9a9a9a"/><rect x="1794.7" y="207.4" width="4.2" height="1.2" fill="#d2d2d2"/><rect x="1802.0" y="207.4" width="10.0" height="1.2" fill="#9a9a9a"/><rect x="1850.2" y="207.4" width="1.6" height="1.2" fill="#d2d2d2"/><rect x="1853.0" y="207.4" width="5.0" height="1.2" fill="#9a9a9a"/><rect x="1794.7" y="209.4" width="4.2" height="1.2" fill="#d2d2d2"/><rect x="1802.0" y="209.4" width="10.0" height="1.2" fill="#9a9a9a"/><rect x="1850.2" y="209.4" width="1.6" height="1.2" fill="#d2d2d2"/><rect x="1853.0" y="209.4" width="5.0" height="1.2" fill="#9a9a9a"/><rect x="1794.7" y="211.4" width="4.2" height="1.2" fill="#d2d2d2"/><rect x="1802.0" y="211.4" width="10.0" height="1.2" fill="#9a9a9a"/><rect x="1850.2" y="211.4" width="1.6" height="1.2" fill="#d2d2d2"/><rect x="1853.0" y="211.4" width="5.0" height="1.2" fill="#9a9a9a"/><rect x="1794.7" y="213.4" width="4.2" height="1.2" fill="#d2d2d2"/><rect x="1802.0" y="213.4" width="10.0" height="1.2" fill="#9a9a9a"/><rect x="1850.2" y="213.4" width="1.6" height="1.2" fill="#d2d2d2"/><rect x="1853.0" y="213.4" width="5.0" height="1.2" fill="#9a9a9a"/><rect x="1794.7" y="215.4" width="4.2" height="1.2" fill="#d2d2d2"/><rect x="1802.0" y="215.4" width="10.0" height="1.2" fill="#9a9a9a"/><rect x="1850.2" y="215.4" width="1.6" height="1.2" fill="#d2d2d2"/><rect x="1853.0" y="215.4" width="5.0" height="1.2" fill="#9a9a9a"/><rect x="1794.7" y="217.5" width="4.2" height="1.2" fill="#d2d2d2"/><rect x="1802.0" y="217.5" width="10.0" height="1.2" fill="#9a9a9a"/><rect x="1850.2" y="217.5" width="1.6" height="1.2" fill="#d2d2d2"/><rect x="1853.0" y="217.5" width="5.0" height="1.2" fill="#9a9a9a"/><rect x="1794.7" y="219.5" width="4.2" height="1.2" fill="#d2d2d2"/><rect x="1802.0" y="219.5" width="10.0" height="1.2" fill="#9a9a9a"/><rect x="1850.2" y="219.5" width="1.6" height="1.2" fill="#d2d2d2"/><rect x="1853.0" y="219.5" width="5.0" height="1.2" fill="#9a9a9a"/><rect x="1794.7" y="221.5" width="4.2" height="1.2" fill="#d2d2d2"/><rect x="1802.0" y="221.5" width="10.0" height="1.2" fill="#9a9a9a"/><rect x="1850.2" y="221.5" width="1.6" height="1.2" fill="#d2d2d2"/><rect x="1853.0" y="221.5" width="5.0" height="1.2" fill="#9a9a9a"/><rect x="1794.7" y="223.5" width="4.2" height="1.2" fill="#d2d2d2"/><rect x="1802.0" y="223.5" width="10.0" height="1.2" fill="#9a9a9a"/><rect x="1850.2" y="223.5" width="1.6" height="1.2" fill="#d2d2d2"/><rect x="1853.0" y="223.5" width="5.0" height="1.2" fill="#9a9a9a"/><rect x="1794.7" y="225.5" width="4.2" height="1.2" fill="#d2d2d2"/><rect x="1802.0" y="225.5" width="10.0" height="1.2" fill="#9a9a9a"/><rect x="1850.2" y="225.5" width="1.6" height="1.2" fill="#d2d2d2"/><rect x="1853.0" y="225.5" width="5.0" height="1.2" fill="#9a9a9a"/><rect x="1794.7" y="227.6" width="4.2" height="1.2" fill="#d2d2d2"/><rect x="1802.0" y="227.6" width="10.0" height="1.2" fill="#9a9a9a"/><rect x="1850.2" y="227.6" width="1.6" height="1.2" fill="#d2d2d2"/><rect x="1853.0" y="227.6" width="5.0" height="1.2" fill="#9a9a9a"/><rect x="1794.7" y="229.6" width="4.2" height="1.2" fill="#d2d2d2"/><rect x="1802.0" y="229.6" width="10.0" height="1.2" fill="#9a9a9a"/><rect x="1850.2" y="229.6" width="1.6" height="1.2" fill="#d2d2d2"/><rect x="1853.0" y="229.6" width="5.0" height="1.2" fill="#9a9a9a"/><rect x="1794.7" y="231.6" width="4.2" height="1.2" fill="#d2d2d2"/><rect x="1802.0" y="231.6" width="10.0" height="1.2" fill="#9a9a9a"/><rect x="1850.2" y="231.6" width="1.6" height="1.2" fill="#d2d2d2"/><rect x="1853.0" y="231.6" width="5.0" height="1.2" fill="#9a9a9a"/><rect x="1794.7" y="233.6" width="4.2" height="1.2" fill="#d2d2d2"/><rect x="1802.0" y="233.6" width="10.0" height="1.2" fill="#9a9a9a"/><rect x="1850.2" y="233.6" width="1.6" height="1.2" fill="#d2d2d2"/><rect x="1853.0" y="233.6" width="5.0" height="1.2" fill="#9a9a9a"/><rect x="1794.7" y="235.6" width="4.2" height="1.2" fill="#d2d2d2"/><rect x="1802.0" y="235.6" width="10.0" height="1.2" fill="#9a9a9a"/><rect x="1850.2" y="235.6" width="1.6" height="1.2" fill="#d2d2d2"/><rect x="1853.0" y="235.6" width="5.0" height="1.2" fill="#9a9a9a"/><rect x="1794.7" y="237.7" width="4.2" height="1.2" fill="#d2d2d2"/><rect x="1802.0" y="237.7" width="10.0" height="1.2" fill="#9a9a9a"/><rect x="1850.2" y="237.7" width="1.6" height="1.2" fill="#d2d2d2"/><rect x="1853.0" y="237.7" width="5.0" height="1.2" fill="#9a9a9a"/><rect x="1794.7" y="239.7" width="4.2" height="1.2" fill="#d2d2d2"/><rect x="1802.0" y="239.7" width="10.0" height="1.2" fill="#9a9a9a"/><rect x="1850.2" y="239.7" width="1.6" height="1.2" fill="#d2d2d2"/><rect x="1853.0" y="239.7" width="5.0" height="1.2" fill="#9a9a9a"/><rect x="1794.7" y="241.7" width="4.2" height="1.2" fill="#d2d2d2"/><rect x="1802.0" y="241.7" width="10.0" height="1.2" fill="#9a9a9a"/><rect x="1850.2" y="241.7" width="1.6" height="1.2" fill="#d2d2d2"/><rect x="1853.0" y="241.7" width="5.0" height="1.2" fill="#9a9a9a"/><rect x="1794.7" y="243.7" width="4.2" height="1.2" fill="#d2d2d2"/><rect x="1802.0" y="243.7" width="10.0" height="1.2" fill="#9a9a9a"/><rect x="1850.2" y="243.7" width="1.6" height="1.2" fill="#d2d2d2"/><rect x="1853.0" y="243.7" width="5.0" height="1.2" fill="#9a9a9a"/><rect x="1794.7" y="245.7" width="4.2" height="1.2" fill="#d2d2d2"/><rect x="1802.0" y="245.7" width="10.0" height="1.2" fill="#9a9a9a"/><rect x="1850.2" y="245.7" width="1.6" height="1.2" fill="#d2d2d2"/><rect x="1853.0" y="245.7" width="5.0" height="1.2" fill="#9a9a9a"/><rect x="1794.7" y="247.8" width="4.2" height="1.2" fill="#d2d2d2"/><rect x="1802.0" y="247.8" width="10.0" height="1.2" fill="#9a9a9a"/><rect x="1850.2" y="247.8" width="1.6" height="1.2" fill="#d2d2d2"/><rect x="1853.0" y="247.8" width="5.0" height="1.2" fill="#9a9a9a"/><rect x="1794.7" y="249.8" width="4.2" height="1.2" fill="#d2d2d2"/><rect x="1802.0" y="249.8" width="10.0" height="1.2" fill="#9a9a9a"/><rect x="1850.2" y="249.8" width="1.6" height="1.2" fill="#d2d2d2"/><rect x="1853.0" y="249.8" width="5.0" height="1.2" fill="#9a9a9a"/><rect x="1794.7" y="251.8" width="4.2" height="1.2" fill="#d2d2d2"/><rect x="1802.0" y="251.8" width="10.0" height="1.2" fill="#9a9a9a"/><rect x="1850.2" y="251.8" width="1.6" height="1.2" fill="#d2d2d2"/><rect x="1853.0" y="251.8" width="5.0" height="1.2" fill="#9a9a9a"/><rect x="1794.7" y="253.8" width="4.2" height="1.2" fill="#d2d2d2"/><rect x="1802.0" y="253.8" width="10.0" height="1.2" fill="#9a9a9a"/><rect x="1850.2" y="253.8" width="1.6" height="1.2" fill="#d2d2d2"/><rect x="1853.0" y="253.8" width="5.0" height="1.2" fill="#9a9a9a"/><rect x="1794.7" y="255.8" width="4.2" height="1.2" fill="#d2d2d2"/><rect x="1802.0" y="255.8" width="10.0" height="1.2" fill="#9a9a9a"/><rect x="1850.2" y="255.8" width="1.6" height="1.2" fill="#d2d2d2"/><rect x="1853.0" y="255.8" width="5.0" height="1.2" fill="#9a9a9a"/><rect x="1794.7" y="260.2" width="3.5" height="1.6" fill="#b4b4b4"/><rect x="1802.9" y="260.2" width="29.7" height="1.6" fill="#b4b4b4"/><rect x="1794.7" y="263.7" width="4.1" height="1.6" fill="#b4b4b4"/><rect x="1794.7" y="265.8" width="5.2" height="1.6" fill="#b4b4b4"/><rect x="1790.1" y="270.1" width="24.4" height="1.6" fill="#b4b4b4"/><rect x="1790.1" y="272.1" width="15.1" height="1.6" fill="#b4b4b4"/><rect x="1790.1" y="274.0" width="33.7" height="1.6" fill="#b4b4b4"/><rect x="1790.1" y="275.7" width="5.8" height="1.6" fill="#b4b4b4"/><rect x="1790.1" y="277.7" width="5.8" height="1.6" fill="#b4b4b4"/><rect x="1790.1" y="280.0" width="18.6" height="1.6" fill="#b4b4b4"/><rect x="1794.7" y="283.9" width="9.9" height="1.6" fill="#b4b4b4"/><rect x="1794.7" y="285.8" width="5.8" height="1.6" fill="#b4b4b4"/><rect x="1794.7" y="287.8" width="4.7" height="1.6" fill="#b4b4b4"/><rect x="1802.9" y="287.8" width="12.8" height="1.6" fill="#b4b4b4"/><rect x="1794.7" y="289.9" width="4.7" height="1.6" fill="#b4b4b4"/><rect x="1802.9" y="289.9" width="12.8" height="1.6" fill="#b4b4b4"/><rect x="1794.7" y="291.9" width="4.7" height="1.6" fill="#b4b4b4"/><rect x="1802.9" y="291.9" width="23.8" height="1.6" fill="#b4b4b4"/><rect x="1790.1" y="293.7" width="13.4" height="1.6" fill="#b4b4b4"/><rect x="1794.7" y="295.9" width="5.2" height="1.6" fill="#b4b4b4"/><rect x="1802.3" y="295.9" width="1.2" height="1.6" fill="#b4b4b4"/><rect x="1822.0" y="295.9" width="20.3" height="1.6" fill="#b4b4b4"/><rect x="1794.7" y="297.8" width="4.7" height="1.6" fill="#b4b4b4"/><rect x="1802.3" y="297.8" width="15.7" height="1.6" fill="#9a9a9a"/><rect x="1794.7" y="299.8" width="2.9" height="1.6" fill="#b4b4b4"/><rect x="1802.3" y="299.8" width="8.7" height="1.6" fill="#b4b4b4"/><rect x="1794.7" y="301.8" width="2.9" height="1.6" fill="#b4b4b4"/><rect x="1802.3" y="301.8" width="16.3" height="1.6" fill="#b4b4b4"/><rect x="1794.7" y="303.9" width="2.9" height="1.6" fill="#b4b4b4"/><rect x="1802.3" y="303.9" width="8.1" height="1.6" fill="#b4b4b4"/><rect x="1794.7" y="305.8" width="2.9" height="1.6" fill="#b4b4b4"/><rect x="1802.3" y="305.8" width="8.1" height="1.6" fill="#b4b4b4"/><rect x="1794.7" y="307.9" width="2.9" height="1.6" fill="#b4b4b4"/><rect x="1802.3" y="307.9" width="5.8" height="1.6" fill="#b4b4b4"/><rect x="1794.7" y="309.9" width="2.9" height="1.6" fill="#b4b4b4"/><rect x="1802.3" y="309.9" width="16.9" height="1.6" fill="#b4b4b4"/><rect x="1794.7" y="312.0" width="2.9" height="1.6" fill="#b4b4b4"/><rect x="1802.3" y="312.0" width="9.9" height="1.6" fill="#b4b4b4"/><rect x="1790.1" y="316.1" width="33.1" height="1.6" fill="#b4b4b4"/><rect x="1794.7" y="317.8" width="2.9" height="1.6" fill="#b4b4b4"/><rect x="1802.3" y="317.8" width="14.5" height="1.6" fill="#9a9a9a"/><rect x="1794.7" y="319.8" width="2.9" height="1.6" fill="#b4b4b4"/><rect x="1802.3" y="319.8" width="20.9" height="1.6" fill="#b4b4b4"/><rect x="1794.7" y="321.9" width="5.8" height="1.6" fill="#b4b4b4"/><rect x="1802.3" y="321.9" width="14.5" height="1.6" fill="#9a9a9a"/><rect x="1794.7" y="324.0" width="2.9" height="1.6" fill="#b4b4b4"/><rect x="1802.3" y="324.0" width="5.2" height="1.6" fill="#b4b4b4"/><rect x="1794.7" y="325.9" width="4.1" height="1.6" fill="#b4b4b4"/><rect x="1802.3" y="325.9" width="14.0" height="1.6" fill="#b4b4b4"/><rect x="1822.0" y="325.9" width="77.9" height="1.6" fill="#b4b4b4"/><rect x="1790.1" y="330.0" width="16.9" height="1.6" fill="#b4b4b4"/><rect x="1822.0" y="330.0" width="22.7" height="1.6" fill="#b4b4b4"/><rect x="1794.7" y="332.0" width="2.9" height="1.6" fill="#b4b4b4"/><rect x="1802.3" y="332.0" width="14.0" height="1.6" fill="#9a9a9a"/><rect x="1794.7" y="333.9" width="2.9" height="1.6" fill="#b4b4b4"/><rect x="1802.3" y="333.9" width="14.0" height="1.6" fill="#9a9a9a"/><rect x="1794.7" y="335.8" width="2.9" height="1.6" fill="#b4b4b4"/><rect x="1802.3" y="335.8" width="5.8" height="1.6" fill="#b4b4b4"/><rect x="1794.7" y="337.9" width="2.9" height="1.6" fill="#b4b4b4"/><rect x="1802.3" y="337.9" width="5.8" height="1.6" fill="#b4b4b4"/><rect x="1794.7" y="339.9" width="2.9" height="1.6" fill="#b4b4b4"/><rect x="1802.3" y="339.9" width="5.8" height="1.6" fill="#b4b4b4"/><rect x="1794.7" y="341.9" width="2.9" height="1.6" fill="#b4b4b4"/><rect x="1802.3" y="341.9" width="5.8" height="1.6" fill="#b4b4b4"/><rect x="1790.1" y="344.0" width="7.0" height="1.6" fill="#b4b4b4"/><rect x="1794.7" y="345.9" width="4.7" height="1.6" fill="#b4b4b4"/><rect x="1802.3" y="345.9" width="13.4" height="1.6" fill="#b4b4b4"/><rect x="1794.7" y="348.0" width="2.9" height="1.6" fill="#b4b4b4"/><rect x="1802.3" y="348.0" width="5.8" height="1.6" fill="#b4b4b4"/><rect x="1794.7" y="350.0" width="4.1" height="1.6" fill="#b4b4b4"/><rect x="1802.3" y="350.0" width="7.0" height="1.6" fill="#b4b4b4"/><rect x="1790.1" y="353.9" width="17.4" height="1.6" fill="#b4b4b4"/><rect x="1822.0" y="353.9" width="23.8" height="1.6" fill="#b4b4b4"/><rect x="1794.7" y="355.8" width="2.9" height="1.6" fill="#b4b4b4"/><rect x="1802.3" y="355.8" width="14.5" height="1.6" fill="#9a9a9a"/><rect x="1794.7" y="357.9" width="2.9" height="1.6" fill="#b4b4b4"/><rect x="1802.3" y="357.9" width="14.5" height="1.6" fill="#9a9a9a"/><rect x="1790.1" y="359.9" width="7.0" height="1.6" fill="#b4b4b4"/><rect x="1794.7" y="362.0" width="4.7" height="1.6" fill="#b4b4b4"/><rect x="1802.3" y="362.0" width="13.4" height="1.6" fill="#b4b4b4"/><rect x="1794.7" y="364.0" width="2.9" height="1.6" fill="#b4b4b4"/><rect x="1802.3" y="364.0" width="5.8" height="1.6" fill="#b4b4b4"/><rect x="1794.7" y="366.1" width="4.1" height="1.6" fill="#b4b4b4"/><rect x="1802.3" y="366.1" width="7.6" height="1.6" fill="#b4b4b4"/><rect x="1790.1" y="369.8" width="14.5" height="1.6" fill="#b4b4b4"/><rect x="1794.7" y="371.8" width="2.9" height="1.6" fill="#b4b4b4"/><rect x="1802.3" y="371.8" width="14.5" height="1.6" fill="#9a9a9a"/><rect x="1794.7" y="373.9" width="2.9" height="1.6" fill="#b4b4b4"/><rect x="1802.3" y="373.9" width="14.5" height="1.6" fill="#9a9a9a"/><rect x="1790.1" y="375.8" width="7.0" height="1.6" fill="#b4b4b4"/><rect x="1822.0" y="375.8" width="21.5" height="1.6" fill="#b4b4b4"/><rect x="1794.7" y="377.9" width="4.7" height="1.6" fill="#b4b4b4"/><rect x="1802.3" y="377.9" width="13.4" height="1.6" fill="#b4b4b4"/><rect x="1794.7" y="379.9" width="2.9" height="1.6" fill="#b4b4b4"/><rect x="1802.3" y="379.9" width="5.8" height="1.6" fill="#b4b4b4"/><rect x="1794.7" y="382.0" width="4.1" height="1.6" fill="#b4b4b4"/><rect x="1802.3" y="382.0" width="5.8" height="1.6" fill="#b4b4b4"/><rect x="1791.8" y="386.1" width="12.8" height="1.6" fill="#b4b4b4"/><rect x="1790.1" y="387.8" width="5.2" height="1.6" fill="#b4b4b4"/><rect x="1790.1" y="391.9" width="23.8" height="1.6" fill="#b4b4b4"/><rect x="1794.7" y="393.9" width="2.9" height="1.6" fill="#b4b4b4"/><rect x="1802.3" y="393.9" width="11.6" height="1.6" fill="#b4b4b4"/><rect x="1794.7" y="395.9" width="2.9" height="1.6" fill="#b4b4b4"/><rect x="1802.3" y="395.9" width="1.0" height="1.6" fill="#b4b4b4"/><rect x="1790.1" y="397.7" width="5.2" height="1.6" fill="#b4b4b4"/><rect x="1790.7" y="399.7" width="1.2" height="1.6" fill="#b4b4b4"/><rect x="1797.0" y="399.7" width="58.1" height="1.6" fill="#b4b4b4"/><rect x="1790.7" y="401.8" width="1.2" height="1.6" fill="#b4b4b4"/><rect x="1797.6" y="401.8" width="63.4" height="1.6" fill="#b4b4b4"/><rect x="1790.7" y="403.7" width="1.2" height="1.6" fill="#b4b4b4"/><rect x="1797.6" y="403.7" width="13.4" height="1.6" fill="#b4b4b4"/><rect x="1790.7" y="405.8" width="1.2" height="1.6" fill="#b4b4b4"/><rect x="1797.6" y="405.8" width="71.5" height="1.6" fill="#b4b4b4"/><rect x="1790.7" y="407.8" width="1.2" height="1.6" fill="#b4b4b4"/><rect x="1797.6" y="407.8" width="66.3" height="1.6" fill="#b4b4b4"/><rect x="1790.7" y="409.9" width="1.2" height="1.6" fill="#b4b4b4"/><rect x="1797.6" y="409.9" width="56.4" height="1.6" fill="#b4b4b4"/><rect x="1794.7" y="414.0" width="2.9" height="1.6" fill="#b4b4b4"/><rect x="1802.3" y="414.0" width="10.5" height="1.6" fill="#b4b4b4"/><rect x="1794.7" y="415.7" width="2.9" height="1.6" fill="#b4b4b4"/><rect x="1802.3" y="415.7" width="17.4" height="1.6" fill="#b4b4b4"/><rect x="1794.7" y="417.8" width="2.9" height="1.6" fill="#b4b4b4"/><rect x="1802.3" y="417.8" width="15.1" height="1.6" fill="#b4b4b4"/><rect x="1790.1" y="421.8" width="34.9" height="1.6" fill="#9a9a9a"/><rect x="1790.1" y="423.9" width="76.2" height="1.6" fill="#b4b4b4"/><rect x="1790.1" y="425.8" width="66.9" height="1.6" fill="#b4b4b4"/><rect x="1790.1" y="427.9" width="80.8" height="1.6" fill="#b4b4b4"/><rect x="1794.7" y="429.9" width="4.1" height="1.6" fill="#b4b4b4"/><rect x="1802.3" y="429.9" width="5.2" height="1.6" fill="#b4b4b4"/><rect x="1794.7" y="432.0" width="2.9" height="1.6" fill="#b4b4b4"/><rect x="1802.3" y="432.0" width="2.3" height="1.6" fill="#b4b4b4"/><rect x="1790.1" y="434.0" width="4.1" height="1.6" fill="#b4b4b4"/><rect x="1794.7" y="436.1" width="2.9" height="1.6" fill="#b4b4b4"/><rect x="1802.3" y="436.1" width="5.2" height="1.6" fill="#b4b4b4"/><rect x="1794.7" y="438.0" width="2.9" height="1.6" fill="#b4b4b4"/><rect x="1802.3" y="438.0" width="10.5" height="1.6" fill="#b4b4b4"/><rect x="1794.7" y="440.1" width="2.9" height="1.6" fill="#b4b4b4"/><rect x="1802.3" y="440.1" width="10.5" height="1.6" fill="#b4b4b4"/><rect x="1794.7" y="442.1" width="2.9" height="1.6" fill="#b4b4b4"/><rect x="1802.3" y="442.1" width="2.3" height="1.6" fill="#b4b4b4"/><rect x="1790.1" y="444.0" width="4.1" height="1.6" fill="#b4b4b4"/><rect x="1790.1" y="445.9" width="4.1" height="1.6" fill="#b4b4b4"/><rect x="1797.0" y="445.9" width="28.5" height="1.6" fill="#b4b4b4"/><rect x="1790.1" y="448.0" width="4.1" height="1.6" fill="#b4b4b4"/><rect x="1794.7" y="450.0" width="2.9" height="1.6" fill="#b4b4b4"/><rect x="1802.3" y="450.0" width="5.2" height="1.6" fill="#b4b4b4"/><rect x="1794.7" y="452.0" width="2.9" height="1.6" fill="#b4b4b4"/><rect x="1802.3" y="452.0" width="1.2" height="1.6" fill="#b4b4b4"/><rect x="1794.7" y="454.1" width="4.1" height="1.6" fill="#b4b4b4"/><rect x="1802.3" y="454.1" width="11.6" height="1.6" fill="#b4b4b4"/><rect x="1794.7" y="456.1" width="4.1" height="1.6" fill="#b4b4b4"/><rect x="1802.3" y="456.1" width="11.6" height="1.6" fill="#b4b4b4"/><rect x="1794.7" y="458.2" width="2.9" height="1.6" fill="#b4b4b4"/><rect x="1802.3" y="458.2" width="2.3" height="1.6" fill="#b4b4b4"/><rect x="1790.1" y="459.9" width="3.5" height="1.6" fill="#b4b4b4"/><rect x="1790.1" y="464.0" width="26.2" height="1.6" fill="#b4b4b4"/><rect x="1790.7" y="465.9" width="1.2" height="1.6" fill="#b4b4b4"/><rect x="1797.0" y="465.9" width="70.9" height="1.6" fill="#b4b4b4"/><rect x="1790.7" y="468.0" width="1.2" height="1.6" fill="#b4b4b4"/><rect x="1797.0" y="468.0" width="46.5" height="1.6" fill="#b4b4b4"/><rect x="1790.7" y="470.0" width="1.2" height="1.6" fill="#b4b4b4"/><rect x="1790.7" y="472.1" width="1.2" height="1.6" fill="#b4b4b4"/><rect x="1797.0" y="472.1" width="58.1" height="1.6" fill="#b4b4b4"/><rect x="1790.7" y="473.9" width="1.2" height="1.6" fill="#b4b4b4"/><rect x="1797.0" y="473.9" width="16.3" height="1.6" fill="#b4b4b4"/><rect x="1790.7" y="475.9" width="1.2" height="1.6" fill="#b4b4b4"/><rect x="1797.6" y="475.9" width="52.3" height="1.6" fill="#b4b4b4"/><rect x="1790.7" y="477.9" width="1.2" height="1.6" fill="#b4b4b4"/><rect x="1797.6" y="477.9" width="47.7" height="1.6" fill="#b4b4b4"/><rect x="1791.2" y="479.9" width="1.2" height="1.6" fill="#b4b4b4"/><rect x="1794.7" y="482.0" width="20.9" height="1.6" fill="#b4b4b4"/><rect x="1794.7" y="484.0" width="19.2" height="1.6" fill="#b4b4b4"/><rect x="1794.7" y="488.0" width="2.9" height="1.6" fill="#b4b4b4"/><rect x="1802.3" y="488.0" width="4.7" height="1.6" fill="#b4b4b4"/><rect x="1790.1" y="490.0" width="4.1" height="1.6" fill="#b4b4b4"/><rect x="1794.7" y="492.1" width="2.3" height="1.6" fill="#b4b4b4"/><rect x="1802.3" y="492.1" width="5.2" height="1.6" fill="#b4b4b4"/><rect x="1794.7" y="494.1" width="1.7" height="1.6" fill="#b4b4b4"/><rect x="1801.7" y="494.1" width="1.2" height="1.6" fill="#b4b4b4"/><rect x="1794.7" y="496.1" width="4.1" height="1.6" fill="#b4b4b4"/><rect x="1802.3" y="496.1" width="11.6" height="1.6" fill="#b4b4b4"/><rect x="1794.7" y="497.9" width="2.9" height="1.6" fill="#b4b4b4"/><rect x="1802.3" y="497.9" width="2.3" height="1.6" fill="#b4b4b4"/><rect x="1790.1" y="499.9" width="31.4" height="1.6" fill="#b4b4b4"/><rect x="1790.1" y="504.0" width="26.7" height="1.6" fill="#b4b4b4"/><rect x="1790.7" y="505.9" width="1.2" height="1.6" fill="#b4b4b4"/><rect x="1797.0" y="505.9" width="70.9" height="1.6" fill="#b4b4b4"/><rect x="1790.7" y="508.0" width="1.2" height="1.6" fill="#b4b4b4"/><rect x="1797.0" y="508.0" width="46.5" height="1.6" fill="#b4b4b4"/><rect x="1790.7" y="510.0" width="1.2" height="1.6" fill="#b4b4b4"/><rect x="1790.7" y="512.1" width="1.2" height="1.6" fill="#b4b4b4"/><rect x="1797.0" y="512.1" width="75.6" height="1.6" fill="#b4b4b4"/><rect x="1790.7" y="513.9" width="1.2" height="1.6" fill="#b4b4b4"/><rect x="1797.0" y="513.9" width="16.3" height="1.6" fill="#b4b4b4"/><rect x="1790.7" y="515.8" width="1.2" height="1.6" fill="#b4b4b4"/><rect x="1797.6" y="515.8" width="54.7" height="1.6" fill="#b4b4b4"/><rect x="1790.7" y="517.9" width="1.2" height="1.6" fill="#b4b4b4"/><rect x="1797.6" y="517.9" width="51.2" height="1.6" fill="#b4b4b4"/><rect x="1791.2" y="519.9" width="1.2" height="1.6" fill="#b4b4b4"/><rect x="1794.7" y="522.0" width="22.1" height="1.6" fill="#b4b4b4"/><rect x="1794.7" y="524.0" width="19.8" height="1.6" fill="#b4b4b4"/><rect x="1794.7" y="528.0" width="2.9" height="1.6" fill="#b4b4b4"/><rect x="1802.3" y="528.0" width="4.7" height="1.6" fill="#b4b4b4"/><rect x="1790.1" y="529.9" width="4.1" height="1.6" fill="#b4b4b4"/><rect x="1794.7" y="531.9" width="2.3" height="1.6" fill="#b4b4b4"/><rect x="1802.3" y="531.9" width="5.2" height="1.6" fill="#b4b4b4"/><rect x="1794.7" y="534.0" width="1.7" height="1.6" fill="#b4b4b4"/><rect x="1801.7" y="534.0" width="1.2" height="1.6" fill="#b4b4b4"/><rect x="1794.7" y="535.9" width="4.1" height="1.6" fill="#b4b4b4"/><rect x="1802.3" y="535.9" width="11.6" height="1.6" fill="#b4b4b4"/><rect x="1794.7" y="537.9" width="2.9" height="1.6" fill="#b4b4b4"/><rect x="1802.3" y="537.9" width="2.3" height="1.6" fill="#b4b4b4"/><rect x="1790.1" y="540.0" width="32.6" height="1.6" fill="#b4b4b4"/><rect x="1794.7" y="544.1" width="4.1" height="1.6" fill="#b4b4b4"/><rect x="1801.7" y="544.1" width="1.0" height="1.6" fill="#b4b4b4"/><rect x="1818.0" y="544.1" width="22.7" height="1.6" fill="#b4b4b4"/><rect x="1790.1" y="546.1" width="14.5" height="1.6" fill="#b4b4b4"/><rect x="1790.1" y="547.9" width="16.9" height="1.6" fill="#b4b4b4"/><rect x="1790.1" y="549.9" width="21.5" height="1.6" fill="#b4b4b4"/><rect x="1790.1" y="551.9" width="4.1" height="1.6" fill="#b4b4b4"/><rect x="1790.1" y="554.0" width="21.5" height="1.6" fill="#b4b4b4"/><rect x="1790.1" y="555.9" width="4.1" height="1.6" fill="#b4b4b4"/><rect x="1790.1" y="557.9" width="4.1" height="1.6" fill="#b4b4b4"/><rect x="1790.1" y="560.0" width="16.9" height="1.6" fill="#b4b4b4"/><rect x="1794.7" y="561.9" width="1.7" height="1.6" fill="#b4b4b4"/><rect x="1800.5" y="561.9" width="9.9" height="1.6" fill="#b4b4b4"/><rect x="1794.7" y="563.9" width="1.7" height="1.6" fill="#b4b4b4"/><rect x="1800.5" y="563.9" width="1.2" height="1.6" fill="#b4b4b4"/><rect x="1790.1" y="565.9" width="4.1" height="1.6" fill="#b4b4b4"/><rect x="1794.7" y="567.9" width="1.7" height="1.6" fill="#b4b4b4"/><rect x="1800.5" y="567.9" width="20.3" height="1.6" fill="#b4b4b4"/><rect x="1794.7" y="569.9" width="1.7" height="1.6" fill="#b4b4b4"/><rect x="1800.5" y="569.9" width="1.2" height="1.6" fill="#b4b4b4"/><rect x="1794.7" y="572.0" width="1.7" height="1.6" fill="#b4b4b4"/><rect x="1800.5" y="572.0" width="7.0" height="1.6" fill="#b4b4b4"/><rect x="1794.7" y="574.0" width="1.7" height="1.6" fill="#b4b4b4"/><rect x="1800.5" y="574.0" width="1.2" height="1.6" fill="#b4b4b4"/><rect x="1790.1" y="576.1" width="5.2" height="1.6" fill="#b4b4b4"/><rect x="1794.7" y="577.8" width="4.1" height="1.6" fill="#b4b4b4"/><rect x="1794.7" y="579.8" width="4.1" height="1.6" fill="#b4b4b4"/><rect x="1800.0" y="579.8" width="32.0" height="1.6" fill="#b4b4b4"/><rect x="1794.7" y="583.9" width="4.7" height="1.6" fill="#b4b4b4"/><rect x="1801.7" y="583.9" width="1.0" height="1.6" fill="#b4b4b4"/><rect x="1794.7" y="585.9" width="4.1" height="1.6" fill="#b4b4b4"/><rect x="1800.0" y="585.9" width="4.7" height="1.6" fill="#b4b4b4"/><rect x="1794.7" y="587.9" width="4.1" height="1.6" fill="#b4b4b4"/><rect x="1800.0" y="587.9" width="9.9" height="1.6" fill="#b4b4b4"/><rect x="1794.7" y="590.0" width="4.1" height="1.6" fill="#b4b4b4"/><rect x="1800.0" y="590.0" width="20.9" height="1.6" fill="#b4b4b4"/><rect x="1790.1" y="592.0" width="9.9" height="1.6" fill="#b4b4b4"/><rect x="1794.1" y="593.9" width="11.6" height="1.6" fill="#b4b4b4"/><rect x="1794.7" y="595.8" width="4.1" height="1.6" fill="#b4b4b4"/><rect x="1800.0" y="595.8" width="26.2" height="1.6" fill="#b4b4b4"/></svg>
<div class="a" style="left:870.2px;top:45px;width:214.4px;height:31.6px;background:#f3f3f3;border-radius:5px;box-shadow:0 2px 8px rgba(0,0,0,0.16)"></div>
<div class="a" style="left:898px;top:48px;width:25.6px;height:25.6px;background:#dedede;border-radius:5px"></div>
<svg class="a" style="left:870px;top:45px" width="215" height="32" viewBox="870 45 215 32">
<g fill="#919191"><circle cx="885" cy="55.6" r="1.25"/><circle cx="890.8" cy="55.6" r="1.25"/><circle cx="885" cy="60.4" r="1.25"/><circle cx="890.8" cy="60.4" r="1.25"/><circle cx="885" cy="65.2" r="1.25"/><circle cx="890.8" cy="65.2" r="1.25"/></g>
<g fill="none" stroke="#007acc" stroke-width="1.7" stroke-linejoin="round">
<path d="M905.3 53.3V67.6"/>
<path d="M909.7 54L918.3 60.5L909.7 67Z"/>
<path d="M935.5 61Q937 53.2 944 53.2Q946.5 53.2 948.6 55.2"/>
<path d="M949.2 52.5V57H944.7"/>
<path d="M973.1 52.6V61.5M968.8 57.7L973.1 62L977.4 57.7"/>
<path d="M1004.3 62.3V53.3M1000 57.2L1004.3 52.9L1008.6 57.2"/>
</g>
<g fill="#007acc"><circle cx="942" cy="65.3" r="2.1"/><circle cx="973.1" cy="66.6" r="2.1"/><circle cx="1004.3" cy="66.6" r="2.1"/></g>
<g fill="none" stroke="#388a34" stroke-width="1.7">
<path d="M1029.8 56.2A7 7 0 1 1 1028.6 62"/>
<path d="M1029.3 52.5V57.2H1034"/>
</g>
<rect x="1060.6" y="54.2" width="12.6" height="12.6" rx="1" fill="none" stroke="#b03b25" stroke-width="1.7"/>
</svg>
<div class="a" style="left:860px;top:79px;width:104.5px;height:27.3px;background:#f3f3f3;border:1px solid #c8c8c8;border-radius:4px;box-shadow:0 2px 6px rgba(0,0,0,0.12)"></div>
<svg class="a" style="left:903px;top:72.5px" width="17" height="8" viewBox="0 0 17 8"><path d="M0 7.8L8.5 0.3L17 7.8" fill="#f3f3f3" stroke="#c8c8c8" stroke-width="1"/></svg>
<div class="a" style="left:904px;top:78.5px;width:15px;height:2px;background:#f3f3f3"></div>
<div class="t" style="left:870.20px;top:86.35px;font-size:14.83px;font-family:'Liberation Sans',sans-serif;font-weight:normal;font-style:normal;color:#616161;transform:scaleX(0.9266);transform-origin:0 0;">Continue (F5)</div>
<div class="a" style="left:549px;top:600px;width:1368px;height:406px;background:#fff"></div>
<div class="a" style="left:549px;top:600px;width:1368px;height:1px;background:#e0e0e0"></div>
<div class="t" style="left:573.30px;top:616.28px;font-size:13.37px;font-family:'Liberation Sans',sans-serif;font-weight:normal;font-style:normal;color:#6f6f6f;transform:scaleX(0.8562);transform-origin:0 0;">PROBLEMS</div>
<div class="t" style="left:666.00px;top:616.28px;font-size:13.37px;font-family:'Liberation Sans',sans-serif;font-weight:normal;font-style:normal;color:#424242;transform:scaleX(0.8897);transform-origin:0 0;">OUTPUT</div>
<div class="t" style="left:744.80px;top:616.28px;font-size:13.37px;font-family:'Liberation Sans',sans-serif;font-weight:normal;font-style:normal;color:#6f6f6f;transform:scaleX(0.8708);transform-origin:0 0;">DEBUG CONSOLE</div>
<div class="t" style="left:876.30px;top:616.28px;font-size:13.37px;font-family:'Liberation Sans',sans-serif;font-weight:normal;font-style:normal;color:#6f6f6f;transform:scaleX(0.8965);transform-origin:0 0;">TERMINAL</div>
<div class="t" style="left:966.20px;top:616.28px;font-size:13.37px;font-family:'Liberation Sans',sans-serif;font-weight:normal;font-style:normal;color:#6f6f6f;transform:scaleX(0.8253);transform-origin:0 0;">PORTS</div>
<div class="t" style="left:1033.00px;top:616.28px;font-size:13.37px;font-family:'Liberation Sans',sans-serif;font-weight:normal;font-style:normal;color:#6f6f6f;transform:scaleX(0.8829);transform-origin:0 0;">EMBEDDED TOOLS</div>
<div class="t" style="left:1172.30px;top:616.28px;font-size:13.37px;font-family:'Liberation Sans',sans-serif;font-weight:normal;font-style:normal;color:#6f6f6f;transform:scaleX(0.9018);transform-origin:0 0;">SERIAL MONITOR</div>
<div class="t" style="left:1304.30px;top:616.28px;font-size:13.37px;font-family:'Liberation Sans',sans-serif;font-weight:normal;font-style:normal;color:#6f6f6f;transform:scaleX(0.8457);transform-origin:0 0;">OFFLINE PERIPHERALS</div>
<div class="a" style="left:664px;top:634.5px;width:54px;height:1.3px;background:#424242"></div>
<div class="a" style="left:1544.5px;top:608.5px;width:203px;height:27px;background:#fff;border:1px solid #cecece"></div>
<div class="t" style="left:1554.60px;top:616.02px;font-size:16.28px;font-family:'Liberation Sans',sans-serif;font-weight:normal;font-style:normal;color:#616161;transform:scaleX(0.9686);transform-origin:0 0;">CMake/Build</div>
<svg class="a" style="left:1715px;top:605px" width="202" height="34" viewBox="1715 605 202 34">
<g fill="none" stroke="#424242" stroke-width="1.2">
<path d="M1724.8 619L1730.5 624.8L1736.3 619"/>
<path d="M1757 615.5H1774M1757 619.8H1774M1757 624H1766M1757 628H1766M1768.5 623.5L1774 628.5M1774 623.5L1768.5 628.5"/>
<rect x="1790" y="620" width="13.5" height="9.8" rx="1.5"/>
<path d="M1792.5 620V616.8Q1792.5 613.2 1796.75 613.2Q1801 613.2 1801 616.8V620"/>
<path d="M1853 624.2L1859 618.2L1865 624.2"/>
<path d="M1885 616.6L1895.4 627M1895.4 616.6L1885 627"/>
</g>
<g fill="#424242"><circle cx="1822" cy="621.8" r="1.25"/><circle cx="1828" cy="621.8" r="1.25"/><circle cx="1834" cy="621.8" r="1.25"/></g>
</svg>
<div class="a" style="left:573px;top:641.5px;width:1330px;height:364px;overflow:hidden">
<div class="code" style="left:0;top:0.00px;color:#3b3b3b">[cmake] C:/SDKs/vscode/FRDM-MCXW71/middleware/wireless/framework/platform/middleware_wireless_framework_platform_sensors_connected_mcu.cmake</div>
<div class="code" style="left:0;top:22.80px;color:#3b3b3b">component is included.</div>
<div class="code" style="left:0;top:45.60px;color:#3b3b3b">[cmake] C:/SDKs/vscode/FRDM-MCXW71/middleware/wireless/framework/SecLib/middleware_wireless_framework_sec_lib_sss_m33.cmake component is</div>
<div class="code" style="left:0;top:68.40px;color:#3b3b3b">included.</div>
<div class="code" style="left:0;top:91.20px;color:#3b3b3b">[cmake] C:/SDKs/vscode/FRDM-MCXW71/middleware/wireless/framework/DBG/SWO/middleware_wireless_framework_swo_dbg.cmake component is included.</div>
<div class="code" style="left:0;top:114.00px;color:#3b3b3b">[cmake] C:/SDKs/vscode/FRDM-MCXW71/middleware/wireless/framework/Common/rtos/freertos/middleware_wireless_freertos_heap.cmake component is</div>
<div class="code" style="left:0;top:136.80px;color:#3b3b3b">included.</div>
<div class="code" style="left:0;top:159.60px;color:#3b3b3b">[cmake] C:/SDKs/vscode/FRDM-MCXW71/devices/MCXW716C/utilities/utilities_misc_utilities.MCXW716C.cmake component is included.</div>
<div class="code" style="left:0;top:182.40px;color:#3b3b3b">[cmake] C:/SDKs/vscode/FRDM-MCXW71/devices/MCXW716C/utilities/debug_console_lite/utility_assert_lite.MCXW716C.cmake component is included.</div>
<div class="code" style="left:0;top:205.20px;color:#3b3b3b">[cmake] C:/SDKs/vscode/FRDM-MCXW71/devices/MCXW716C/utilities/utility_debug_console_lite.MCXW716C.cmake component is included.</div>
<div class="code" style="left:0;top:228.00px;color:#3b3b3b">[cmake] C:/SDKs/vscode/FRDM-MCXW71/devices/MCXW716C/utilities/format/utility_format.MCXW716C.cmake component is included.</div>
<div class="code" style="left:0;top:250.80px;color:#3b3b3b">[cmake] C:/SDKs/vscode/FRDM-MCXW71/devices/MCXW716C/utilities/utility_str.MCXW716C.cmake component is included.</div>
<div class="code" style="left:0;top:273.60px;color:#3b3b3b">[cmake] -- Configuring done (1.0s)</div>
<div class="code" style="left:0;top:296.40px;color:#3b3b3b">[cmake] -- Generating done (0.0s)</div>
<div class="code" style="left:0;top:319.20px;color:#3b3b3b">[cmake] -- Build files have been written to: <span style="text-decoration:underline;text-underline-offset:3px">C:/SDKs/vscode/projects/frdmmcxw71/frdmmcxw71_wireless_uart_freertos/armgcc/debug</span></div>
</div>
<div class="a" style="left:549px;top:642px;width:1354px;height:4px;background:linear-gradient(rgba(0,0,0,0.09),rgba(0,0,0,0))"></div>
<div class="a" style="left:1902.5px;top:642px;width:1px;height:364px;background:#e5e5e5"></div>
<div class="a" style="left:1903px;top:642px;width:14px;height:2.5px;background:#6a6a6a"></div>
<div class="a" style="left:0;top:1006px;width:1917px;height:26px;background:#cc6633"></div>
<div class="a" style="left:0;top:1006px;width:39px;height:26px;background:#16825d"></div>
<svg class="a" style="left:0;top:1006px" width="700" height="26" viewBox="0 1006 700 26">
<g fill="none" stroke="#fff" stroke-width="1.3">
<path d="M13.5 1017.5L17.3 1021.2L13.3 1024.7M23.8 1010.6L19.8 1014.2L23.8 1017.8"/>
<circle cx="56.8" cy="1018.8" r="6.8"/>
<path d="M54 1016L59.6 1021.6M59.6 1016L54 1021.6"/>
<path d="M89.4 1012.5L96.3 1024.8H82.5Z" stroke-linejoin="round"/>
<path d="M89.4 1016.5V1020.8M89.4 1022.2V1023.2"/>
<path d="M137.3 1015.5L133 1025M137.3 1015.5L141.6 1025M134.5 1021.5H140M133.5 1013Q131.5 1015.5 133.5 1018M141 1013Q143 1015.5 141 1018M131.5 1011Q128.5 1015.5 131.5 1020M143 1011Q146 1015.5 143 1020"/>
<path d="M182 1016.5V1010.8L191.8 1016.8L185 1021"/>
<path d="M178.6 1020.2Q178.6 1018 181 1018Q183.4 1018 183.4 1020.2V1022.8Q183.4 1025 181 1025Q178.6 1025 178.6 1022.8Z"/>
<path d="M176.3 1019L178.6 1020.5M176.3 1022H178.6M176.3 1025.3L178.6 1024M185.7 1019L183.4 1020.5M178.6 1020H183.4"/>
</g>
<path d="M645.93 1016.02L647.99 1016.04L647.99 1018.56L645.93 1018.58L645.42 1019.81L646.86 1021.28L645.08 1023.06L643.61 1021.62L642.38 1022.13L642.36 1024.19L639.84 1024.19L639.82 1022.13L638.59 1021.62L637.12 1023.06L635.34 1021.28L636.78 1019.81L636.27 1018.58L634.21 1018.56L634.21 1016.04L636.27 1016.02L636.78 1014.79L635.34 1013.32L637.12 1011.54L638.59 1012.98L639.82 1012.47L639.84 1010.41L642.36 1010.41L642.38 1012.47L643.61 1012.98L645.08 1011.54L646.86 1013.32L645.42 1014.79Z" fill="none" stroke="#fff" stroke-width="1.3" stroke-linejoin="round"/><circle cx="641.1" cy="1017.3" r="1.9" fill="none" stroke="#fff" stroke-width="1.3"/>
</svg>
<div class="t" style="left:69.80px;top:1014.25px;font-size:13.52px;font-family:'Liberation Sans',sans-serif;font-weight:normal;font-style:normal;color:#ffffff;transform:scaleX(0.8931);transform-origin:0 0;">0</div>
<div class="t" style="left:102.00px;top:1014.25px;font-size:13.52px;font-family:'Liberation Sans',sans-serif;font-weight:normal;font-style:normal;color:#ffffff;transform:scaleX(0.8931);transform-origin:0 0;">0</div>
<div class="t" style="left:149.40px;top:1014.25px;font-size:13.52px;font-family:'Liberation Sans',sans-serif;font-weight:normal;font-style:normal;color:#ffffff;transform:scaleX(0.8931);transform-origin:0 0;">0</div>
<div class="t" style="left:197.80px;top:1013.89px;font-size:13.95px;font-family:'Liberation Sans',sans-serif;font-weight:normal;font-style:normal;color:#ffffff;transform:scaleX(1.0181);transform-origin:0 0;">Debug project configuration (frdmmcxw71_wireless_uart_freertos)</div>
<div class="t" style="left:654.30px;top:1013.89px;font-size:13.95px;font-family:'Liberation Sans',sans-serif;font-weight:normal;font-style:normal;color:#ffffff;transform:scaleX(1.0146);transform-origin:0 0;">Build</div>
<div class="t" style="left:1544.30px;top:1013.89px;font-size:13.95px;font-family:'Liberation Sans',sans-serif;font-weight:normal;font-style:normal;color:#ffffff;transform:scaleX(0.9672);transform-origin:0 0;">Ln 300, Col 1</div>
<div class="t" style="left:1644.60px;top:1013.89px;font-size:13.95px;font-family:'Liberation Sans',sans-serif;font-weight:normal;font-style:normal;color:#ffffff;transform:scaleX(0.9400);transform-origin:0 0;">Spaces: 4</div>
<div class="t" style="left:1722.80px;top:1013.89px;font-size:13.95px;font-family:'Liberation Sans',sans-serif;font-weight:normal;font-style:normal;color:#ffffff;transform:scaleX(0.9404);transform-origin:0 0;">UTF-8</div>
<div class="t" style="left:1780.30px;top:1013.89px;font-size:13.95px;font-family:'Liberation Sans',sans-serif;font-weight:normal;font-style:normal;color:#ffffff;transform:scaleX(0.7813);transform-origin:0 0;">LF</div>
<div class="t" style="left:1807.20px;top:1013.89px;font-size:13.95px;font-family:'Liberation Sans',sans-serif;font-weight:normal;font-style:normal;color:#ffffff;transform:scaleX(0.9705);transform-origin:0 0;">Plain Text</div>
<svg class="a" style="left:1880px;top:1007px" width="24" height="22" viewBox="0 0 24 22"><path d="M10.5 4.5Q6.2 4.8 6.2 9.8V14.5L4.5 16.8H16.5L14.8 14.5V10.5M8.8 18.3Q10.5 20 12.2 18.3" fill="none" stroke="#fff" stroke-width="1.2"/><circle cx="16.2" cy="5.2" r="2.7" fill="#fff"/></svg>
</body></html>
